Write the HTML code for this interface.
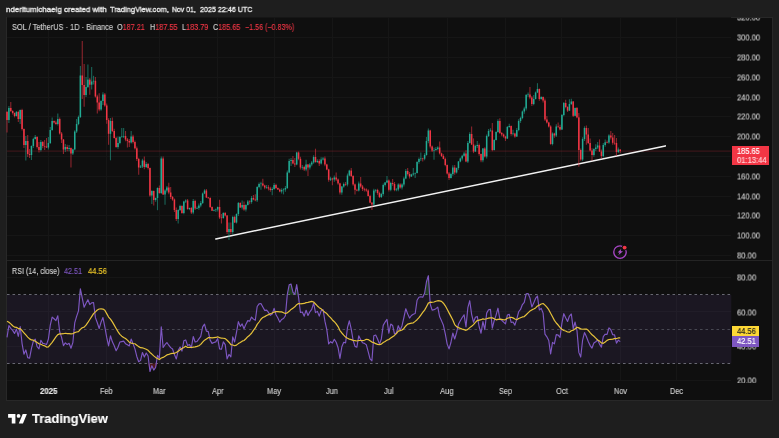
<!DOCTYPE html>
<html><head><meta charset="utf-8"><title>SOL</title><style>
html,body{margin:0;padding:0;background:#1e1e1e;}
body{width:779px;height:438px;overflow:hidden;position:relative;font-family:"Liberation Sans",sans-serif;}
.t{position:absolute;white-space:nowrap;line-height:1;will-change:transform;-webkit-text-stroke-width:0.14px;}
#pane{position:absolute;left:6px;top:17px;width:765px;height:382px;background:#0f0f0f;border:1px solid #282828;}
svg{position:absolute;left:0;top:0;}
.ax{color:#c9c9c9;font-size:7.9px;left:736.5px;}
.tm{color:#c9c9c9;font-size:7.9px;transform:translateX(-50%);top:387.5px;}
.lb{position:absolute;}
</style></head><body>
<div id="pane"></div>
<svg width="779" height="438" viewBox="0 0 779 438"><line x1="48.5" y1="18" x2="48.5" y2="380" stroke="#161616" stroke-width="1"/>
<line x1="106.5" y1="18" x2="106.5" y2="380" stroke="#161616" stroke-width="1"/>
<line x1="159.5" y1="18" x2="159.5" y2="380" stroke="#161616" stroke-width="1"/>
<line x1="217.5" y1="18" x2="217.5" y2="380" stroke="#161616" stroke-width="1"/>
<line x1="274.5" y1="18" x2="274.5" y2="380" stroke="#161616" stroke-width="1"/>
<line x1="332.5" y1="18" x2="332.5" y2="380" stroke="#161616" stroke-width="1"/>
<line x1="388.5" y1="18" x2="388.5" y2="380" stroke="#161616" stroke-width="1"/>
<line x1="447.5" y1="18" x2="447.5" y2="380" stroke="#161616" stroke-width="1"/>
<line x1="505.5" y1="18" x2="505.5" y2="380" stroke="#161616" stroke-width="1"/>
<line x1="561.5" y1="18" x2="561.5" y2="380" stroke="#161616" stroke-width="1"/>
<line x1="620.5" y1="18" x2="620.5" y2="380" stroke="#161616" stroke-width="1"/>
<line x1="676.5" y1="18" x2="676.5" y2="380" stroke="#161616" stroke-width="1"/>
<line x1="7" y1="255.5" x2="731" y2="255.5" stroke="#161616" stroke-width="1"/>
<line x1="7" y1="235.5" x2="731" y2="235.5" stroke="#161616" stroke-width="1"/>
<line x1="7" y1="215.5" x2="731" y2="215.5" stroke="#161616" stroke-width="1"/>
<line x1="7" y1="196.5" x2="731" y2="196.5" stroke="#161616" stroke-width="1"/>
<line x1="7" y1="176.5" x2="731" y2="176.5" stroke="#161616" stroke-width="1"/>
<line x1="7" y1="156.5" x2="731" y2="156.5" stroke="#161616" stroke-width="1"/>
<line x1="7" y1="136.5" x2="731" y2="136.5" stroke="#161616" stroke-width="1"/>
<line x1="7" y1="116.5" x2="731" y2="116.5" stroke="#161616" stroke-width="1"/>
<line x1="7" y1="97.5" x2="731" y2="97.5" stroke="#161616" stroke-width="1"/>
<line x1="7" y1="77.5" x2="731" y2="77.5" stroke="#161616" stroke-width="1"/>
<line x1="7" y1="57.5" x2="731" y2="57.5" stroke="#161616" stroke-width="1"/>
<line x1="7" y1="37.5" x2="731" y2="37.5" stroke="#161616" stroke-width="1"/>
<line x1="7" y1="17.5" x2="731" y2="17.5" stroke="#161616" stroke-width="1"/>
<line x1="7" y1="380.5" x2="731" y2="380.5" stroke="#161616" stroke-width="1"/>
<line x1="7" y1="346.5" x2="731" y2="346.5" stroke="#161616" stroke-width="1"/>
<line x1="7" y1="311.5" x2="731" y2="311.5" stroke="#161616" stroke-width="1"/>
<line x1="7" y1="277.5" x2="731" y2="277.5" stroke="#161616" stroke-width="1"/>
<line x1="7" y1="260.5" x2="772" y2="260.5" stroke="#242424" stroke-width="1"/>
<rect x="7" y="294.8" width="724.3" height="68.6" fill="#7e57c2" fill-opacity="0.11"/>
<line x1="7" y1="294.5" x2="731.3" y2="294.5" stroke="#686872" stroke-width="1" stroke-dasharray="2.6 2.9"/>
<line x1="7" y1="329.5" x2="731.3" y2="329.5" stroke="#484852" stroke-width="1" stroke-dasharray="2.6 2.9"/>
<line x1="7" y1="363.5" x2="731.3" y2="363.5" stroke="#686872" stroke-width="1" stroke-dasharray="2.6 2.9"/>
<line x1="7" y1="151.1" x2="731" y2="151.1" stroke="#f23645" stroke-opacity="0.24" stroke-width="1"/>
<line x1="215.8" y1="238.9" x2="665.3" y2="145.9" stroke="#f2f2f2" stroke-width="1.55" stroke-linecap="round"/>
<line x1="7.02" y1="111.00" x2="7.02" y2="132.50" stroke="#f23645" stroke-width="1.1" stroke-opacity="0.55"/>
<rect x="6.27" y="112.00" width="1.5" height="8.00" fill="#f23645"/>
<line x1="8.90" y1="106.00" x2="8.90" y2="123.00" stroke="#22ab94" stroke-width="1.1" stroke-opacity="0.55"/>
<rect x="8.15" y="108.00" width="1.5" height="12.00" fill="#22ab94"/>
<line x1="10.78" y1="102.00" x2="10.78" y2="111.98" stroke="#f23645" stroke-width="1.1" stroke-opacity="0.55"/>
<rect x="10.03" y="108.00" width="1.5" height="3.00" fill="#f23645"/>
<line x1="12.66" y1="110.33" x2="12.66" y2="114.57" stroke="#f23645" stroke-width="1.1" stroke-opacity="0.55"/>
<rect x="11.91" y="111.00" width="1.5" height="2.00" fill="#f23645"/>
<line x1="14.54" y1="112.47" x2="14.54" y2="117.36" stroke="#f23645" stroke-width="1.1" stroke-opacity="0.55"/>
<rect x="13.79" y="113.00" width="1.5" height="3.00" fill="#f23645"/>
<line x1="16.42" y1="110.94" x2="16.42" y2="116.50" stroke="#22ab94" stroke-width="1.1" stroke-opacity="0.55"/>
<rect x="15.67" y="112.00" width="1.5" height="4.00" fill="#22ab94"/>
<line x1="18.30" y1="110.69" x2="18.30" y2="122.00" stroke="#f23645" stroke-width="1.1" stroke-opacity="0.55"/>
<rect x="17.55" y="112.00" width="1.5" height="7.00" fill="#f23645"/>
<line x1="20.18" y1="109.53" x2="20.18" y2="124.00" stroke="#22ab94" stroke-width="1.1" stroke-opacity="0.55"/>
<rect x="19.43" y="110.00" width="1.5" height="9.00" fill="#22ab94"/>
<line x1="22.07" y1="108.82" x2="22.07" y2="130.60" stroke="#f23645" stroke-width="1.1" stroke-opacity="0.55"/>
<rect x="21.32" y="110.00" width="1.5" height="19.00" fill="#f23645"/>
<line x1="23.95" y1="128.47" x2="23.95" y2="148.00" stroke="#f23645" stroke-width="1.1" stroke-opacity="0.55"/>
<rect x="23.20" y="129.00" width="1.5" height="16.00" fill="#f23645"/>
<line x1="25.83" y1="136.00" x2="25.83" y2="160.50" stroke="#22ab94" stroke-width="1.1" stroke-opacity="0.55"/>
<rect x="25.08" y="141.00" width="1.5" height="4.00" fill="#22ab94"/>
<line x1="27.71" y1="135.00" x2="27.71" y2="157.00" stroke="#f23645" stroke-width="1.1" stroke-opacity="0.55"/>
<rect x="26.96" y="141.00" width="1.5" height="13.00" fill="#f23645"/>
<line x1="29.59" y1="149.00" x2="29.59" y2="158.00" stroke="#f23645" stroke-width="1.1" stroke-opacity="0.55"/>
<rect x="28.84" y="154.00" width="1.5" height="1.00" fill="#f23645"/>
<line x1="31.47" y1="145.44" x2="31.47" y2="160.00" stroke="#22ab94" stroke-width="1.1" stroke-opacity="0.55"/>
<rect x="30.72" y="146.00" width="1.5" height="9.00" fill="#22ab94"/>
<line x1="33.35" y1="137.84" x2="33.35" y2="147.89" stroke="#22ab94" stroke-width="1.1" stroke-opacity="0.55"/>
<rect x="32.60" y="139.00" width="1.5" height="7.00" fill="#22ab94"/>
<line x1="35.23" y1="135.00" x2="35.23" y2="139.62" stroke="#22ab94" stroke-width="1.1" stroke-opacity="0.55"/>
<rect x="34.48" y="137.00" width="1.5" height="2.00" fill="#22ab94"/>
<line x1="37.11" y1="136.20" x2="37.11" y2="148.53" stroke="#f23645" stroke-width="1.1" stroke-opacity="0.55"/>
<rect x="36.36" y="137.00" width="1.5" height="10.00" fill="#f23645"/>
<line x1="38.99" y1="142.00" x2="38.99" y2="152.60" stroke="#f23645" stroke-width="1.1" stroke-opacity="0.55"/>
<rect x="38.24" y="147.00" width="1.5" height="3.00" fill="#f23645"/>
<line x1="40.88" y1="139.89" x2="40.88" y2="151.44" stroke="#22ab94" stroke-width="1.1" stroke-opacity="0.55"/>
<rect x="40.13" y="142.00" width="1.5" height="8.00" fill="#22ab94"/>
<line x1="42.76" y1="140.89" x2="42.76" y2="148.16" stroke="#f23645" stroke-width="1.1" stroke-opacity="0.55"/>
<rect x="42.01" y="142.00" width="1.5" height="4.00" fill="#f23645"/>
<line x1="44.64" y1="140.00" x2="44.64" y2="150.00" stroke="#f23645" stroke-width="1.1" stroke-opacity="0.55"/>
<rect x="43.89" y="146.00" width="1.5" height="0.60" fill="#f23645"/>
<line x1="46.52" y1="138.00" x2="46.52" y2="147.98" stroke="#f23645" stroke-width="1.1" stroke-opacity="0.55"/>
<rect x="45.77" y="146.50" width="1.5" height="1.00" fill="#f23645"/>
<line x1="48.40" y1="137.00" x2="48.40" y2="149.45" stroke="#22ab94" stroke-width="1.1" stroke-opacity="0.55"/>
<rect x="47.65" y="143.00" width="1.5" height="4.50" fill="#22ab94"/>
<line x1="50.28" y1="127.00" x2="50.28" y2="143.92" stroke="#22ab94" stroke-width="1.1" stroke-opacity="0.55"/>
<rect x="49.53" y="130.00" width="1.5" height="13.00" fill="#22ab94"/>
<line x1="52.16" y1="117.50" x2="52.16" y2="130.66" stroke="#22ab94" stroke-width="1.1" stroke-opacity="0.55"/>
<rect x="51.41" y="121.00" width="1.5" height="9.00" fill="#22ab94"/>
<line x1="54.04" y1="120.39" x2="54.04" y2="123.46" stroke="#f23645" stroke-width="1.1" stroke-opacity="0.55"/>
<rect x="53.29" y="121.00" width="1.5" height="1.50" fill="#f23645"/>
<line x1="55.92" y1="120.63" x2="55.92" y2="124.73" stroke="#f23645" stroke-width="1.1" stroke-opacity="0.55"/>
<rect x="55.17" y="122.50" width="1.5" height="1.50" fill="#f23645"/>
<line x1="57.80" y1="113.50" x2="57.80" y2="125.45" stroke="#22ab94" stroke-width="1.1" stroke-opacity="0.55"/>
<rect x="57.05" y="119.00" width="1.5" height="5.00" fill="#22ab94"/>
<line x1="59.69" y1="117.45" x2="59.69" y2="134.57" stroke="#f23645" stroke-width="1.1" stroke-opacity="0.55"/>
<rect x="58.94" y="119.00" width="1.5" height="14.50" fill="#f23645"/>
<line x1="61.57" y1="132.11" x2="61.57" y2="143.00" stroke="#f23645" stroke-width="1.1" stroke-opacity="0.55"/>
<rect x="60.82" y="133.50" width="1.5" height="6.00" fill="#f23645"/>
<line x1="63.45" y1="138.99" x2="63.45" y2="154.00" stroke="#f23645" stroke-width="1.1" stroke-opacity="0.55"/>
<rect x="62.70" y="139.50" width="1.5" height="10.00" fill="#f23645"/>
<line x1="65.33" y1="144.00" x2="65.33" y2="152.00" stroke="#22ab94" stroke-width="1.1" stroke-opacity="0.55"/>
<rect x="64.58" y="147.00" width="1.5" height="2.50" fill="#22ab94"/>
<line x1="67.21" y1="144.80" x2="67.21" y2="151.20" stroke="#f23645" stroke-width="1.1" stroke-opacity="0.55"/>
<rect x="66.46" y="147.00" width="1.5" height="2.00" fill="#f23645"/>
<line x1="69.09" y1="145.00" x2="69.09" y2="151.20" stroke="#22ab94" stroke-width="1.1" stroke-opacity="0.55"/>
<rect x="68.34" y="148.00" width="1.5" height="1.00" fill="#22ab94"/>
<line x1="70.97" y1="147.49" x2="70.97" y2="167.60" stroke="#f23645" stroke-width="1.1" stroke-opacity="0.55"/>
<rect x="70.22" y="148.00" width="1.5" height="5.50" fill="#f23645"/>
<line x1="72.85" y1="148.63" x2="72.85" y2="155.12" stroke="#22ab94" stroke-width="1.1" stroke-opacity="0.55"/>
<rect x="72.10" y="149.40" width="1.5" height="4.10" fill="#22ab94"/>
<line x1="74.73" y1="130.33" x2="74.73" y2="150.37" stroke="#22ab94" stroke-width="1.1" stroke-opacity="0.55"/>
<rect x="73.98" y="131.50" width="1.5" height="17.90" fill="#22ab94"/>
<line x1="76.61" y1="119.00" x2="76.61" y2="132.95" stroke="#22ab94" stroke-width="1.1" stroke-opacity="0.55"/>
<rect x="75.86" y="124.00" width="1.5" height="7.50" fill="#22ab94"/>
<line x1="78.50" y1="115.50" x2="78.50" y2="125.22" stroke="#22ab94" stroke-width="1.1" stroke-opacity="0.55"/>
<rect x="77.75" y="117.00" width="1.5" height="7.00" fill="#22ab94"/>
<line x1="80.38" y1="66.00" x2="80.38" y2="118.00" stroke="#22ab94" stroke-width="1.1" stroke-opacity="0.55"/>
<rect x="79.63" y="75.50" width="1.5" height="41.50" fill="#22ab94"/>
<line x1="82.26" y1="41.00" x2="82.26" y2="99.00" stroke="#f23645" stroke-width="1.1" stroke-opacity="0.55"/>
<rect x="81.51" y="75.50" width="1.5" height="9.50" fill="#f23645"/>
<line x1="84.14" y1="64.00" x2="84.14" y2="106.80" stroke="#f23645" stroke-width="1.1" stroke-opacity="0.55"/>
<rect x="83.39" y="85.00" width="1.5" height="10.00" fill="#f23645"/>
<line x1="86.02" y1="77.00" x2="86.02" y2="97.00" stroke="#22ab94" stroke-width="1.1" stroke-opacity="0.55"/>
<rect x="85.27" y="87.00" width="1.5" height="8.00" fill="#22ab94"/>
<line x1="87.90" y1="64.60" x2="87.90" y2="88.00" stroke="#22ab94" stroke-width="1.1" stroke-opacity="0.55"/>
<rect x="87.15" y="79.60" width="1.5" height="7.40" fill="#22ab94"/>
<line x1="89.78" y1="78.00" x2="89.78" y2="94.70" stroke="#f23645" stroke-width="1.1" stroke-opacity="0.55"/>
<rect x="89.03" y="79.60" width="1.5" height="5.10" fill="#f23645"/>
<line x1="91.66" y1="67.00" x2="91.66" y2="89.40" stroke="#22ab94" stroke-width="1.1" stroke-opacity="0.55"/>
<rect x="90.91" y="81.50" width="1.5" height="3.20" fill="#22ab94"/>
<line x1="93.54" y1="75.80" x2="93.54" y2="84.50" stroke="#22ab94" stroke-width="1.1" stroke-opacity="0.55"/>
<rect x="92.79" y="80.80" width="1.5" height="0.70" fill="#22ab94"/>
<line x1="95.42" y1="77.00" x2="95.42" y2="97.44" stroke="#f23645" stroke-width="1.1" stroke-opacity="0.55"/>
<rect x="94.67" y="80.80" width="1.5" height="15.70" fill="#f23645"/>
<line x1="97.31" y1="94.67" x2="97.31" y2="113.60" stroke="#f23645" stroke-width="1.1" stroke-opacity="0.55"/>
<rect x="96.56" y="96.50" width="1.5" height="6.00" fill="#f23645"/>
<line x1="99.19" y1="93.30" x2="99.19" y2="111.16" stroke="#f23645" stroke-width="1.1" stroke-opacity="0.55"/>
<rect x="98.44" y="102.50" width="1.5" height="7.00" fill="#f23645"/>
<line x1="101.07" y1="100.16" x2="101.07" y2="110.70" stroke="#22ab94" stroke-width="1.1" stroke-opacity="0.55"/>
<rect x="100.32" y="101.00" width="1.5" height="8.50" fill="#22ab94"/>
<line x1="102.95" y1="92.30" x2="102.95" y2="105.00" stroke="#22ab94" stroke-width="1.1" stroke-opacity="0.55"/>
<rect x="102.20" y="94.50" width="1.5" height="6.50" fill="#22ab94"/>
<line x1="104.83" y1="93.07" x2="104.83" y2="106.85" stroke="#f23645" stroke-width="1.1" stroke-opacity="0.55"/>
<rect x="104.08" y="94.50" width="1.5" height="11.00" fill="#f23645"/>
<line x1="106.71" y1="103.52" x2="106.71" y2="123.80" stroke="#f23645" stroke-width="1.1" stroke-opacity="0.55"/>
<rect x="105.96" y="105.50" width="1.5" height="14.50" fill="#f23645"/>
<line x1="108.59" y1="118.29" x2="108.59" y2="144.80" stroke="#f23645" stroke-width="1.1" stroke-opacity="0.55"/>
<rect x="107.84" y="120.00" width="1.5" height="13.80" fill="#f23645"/>
<line x1="110.47" y1="118.00" x2="110.47" y2="160.30" stroke="#22ab94" stroke-width="1.1" stroke-opacity="0.55"/>
<rect x="109.72" y="121.00" width="1.5" height="12.80" fill="#22ab94"/>
<line x1="112.35" y1="117.40" x2="112.35" y2="131.92" stroke="#f23645" stroke-width="1.1" stroke-opacity="0.55"/>
<rect x="111.60" y="121.00" width="1.5" height="10.00" fill="#f23645"/>
<line x1="114.23" y1="128.84" x2="114.23" y2="138.61" stroke="#f23645" stroke-width="1.1" stroke-opacity="0.55"/>
<rect x="113.48" y="131.00" width="1.5" height="7.00" fill="#f23645"/>
<line x1="116.12" y1="136.85" x2="116.12" y2="147.80" stroke="#f23645" stroke-width="1.1" stroke-opacity="0.55"/>
<rect x="115.37" y="138.00" width="1.5" height="9.00" fill="#f23645"/>
<line x1="118.00" y1="136.60" x2="118.00" y2="148.76" stroke="#22ab94" stroke-width="1.1" stroke-opacity="0.55"/>
<rect x="117.25" y="143.00" width="1.5" height="4.00" fill="#22ab94"/>
<line x1="119.88" y1="136.33" x2="119.88" y2="144.28" stroke="#22ab94" stroke-width="1.1" stroke-opacity="0.55"/>
<rect x="119.13" y="137.00" width="1.5" height="6.00" fill="#22ab94"/>
<line x1="121.76" y1="128.00" x2="121.76" y2="137.47" stroke="#22ab94" stroke-width="1.1" stroke-opacity="0.55"/>
<rect x="121.01" y="136.50" width="1.5" height="0.60" fill="#22ab94"/>
<line x1="123.64" y1="128.00" x2="123.64" y2="138.10" stroke="#22ab94" stroke-width="1.1" stroke-opacity="0.55"/>
<rect x="122.89" y="136.00" width="1.5" height="0.60" fill="#22ab94"/>
<line x1="125.52" y1="131.00" x2="125.52" y2="141.28" stroke="#f23645" stroke-width="1.1" stroke-opacity="0.55"/>
<rect x="124.77" y="136.00" width="1.5" height="3.50" fill="#f23645"/>
<line x1="127.40" y1="138.07" x2="127.40" y2="147.40" stroke="#f23645" stroke-width="1.1" stroke-opacity="0.55"/>
<rect x="126.65" y="139.50" width="1.5" height="1.50" fill="#f23645"/>
<line x1="129.28" y1="139.02" x2="129.28" y2="147.00" stroke="#f23645" stroke-width="1.1" stroke-opacity="0.55"/>
<rect x="128.53" y="141.00" width="1.5" height="1.50" fill="#f23645"/>
<line x1="131.16" y1="131.00" x2="131.16" y2="143.46" stroke="#22ab94" stroke-width="1.1" stroke-opacity="0.55"/>
<rect x="130.41" y="136.50" width="1.5" height="6.00" fill="#22ab94"/>
<line x1="133.04" y1="134.85" x2="133.04" y2="143.47" stroke="#f23645" stroke-width="1.1" stroke-opacity="0.55"/>
<rect x="132.29" y="136.50" width="1.5" height="5.50" fill="#f23645"/>
<line x1="134.93" y1="140.56" x2="134.93" y2="149.52" stroke="#f23645" stroke-width="1.1" stroke-opacity="0.55"/>
<rect x="134.18" y="142.00" width="1.5" height="6.30" fill="#f23645"/>
<line x1="136.81" y1="146.39" x2="136.81" y2="161.10" stroke="#f23645" stroke-width="1.1" stroke-opacity="0.55"/>
<rect x="136.06" y="148.30" width="1.5" height="10.70" fill="#f23645"/>
<line x1="138.69" y1="157.75" x2="138.69" y2="174.80" stroke="#f23645" stroke-width="1.1" stroke-opacity="0.55"/>
<rect x="137.94" y="159.00" width="1.5" height="8.50" fill="#f23645"/>
<line x1="140.57" y1="164.90" x2="140.57" y2="168.01" stroke="#22ab94" stroke-width="1.1" stroke-opacity="0.55"/>
<rect x="139.82" y="166.50" width="1.5" height="1.00" fill="#22ab94"/>
<line x1="142.45" y1="158.84" x2="142.45" y2="168.06" stroke="#22ab94" stroke-width="1.1" stroke-opacity="0.55"/>
<rect x="141.70" y="160.50" width="1.5" height="6.00" fill="#22ab94"/>
<line x1="144.33" y1="156.60" x2="144.33" y2="169.19" stroke="#f23645" stroke-width="1.1" stroke-opacity="0.55"/>
<rect x="143.58" y="160.50" width="1.5" height="6.50" fill="#f23645"/>
<line x1="146.21" y1="162.12" x2="146.21" y2="167.91" stroke="#22ab94" stroke-width="1.1" stroke-opacity="0.55"/>
<rect x="145.46" y="164.00" width="1.5" height="3.00" fill="#22ab94"/>
<line x1="148.09" y1="162.91" x2="148.09" y2="169.60" stroke="#f23645" stroke-width="1.1" stroke-opacity="0.55"/>
<rect x="147.34" y="164.00" width="1.5" height="4.00" fill="#f23645"/>
<line x1="149.97" y1="167.56" x2="149.97" y2="196.73" stroke="#f23645" stroke-width="1.1" stroke-opacity="0.55"/>
<rect x="149.22" y="168.00" width="1.5" height="27.50" fill="#f23645"/>
<line x1="151.85" y1="190.30" x2="151.85" y2="204.00" stroke="#22ab94" stroke-width="1.1" stroke-opacity="0.55"/>
<rect x="151.10" y="191.00" width="1.5" height="4.50" fill="#22ab94"/>
<line x1="153.74" y1="190.39" x2="153.74" y2="205.60" stroke="#f23645" stroke-width="1.1" stroke-opacity="0.55"/>
<rect x="152.99" y="191.00" width="1.5" height="9.00" fill="#f23645"/>
<line x1="155.62" y1="197.49" x2="155.62" y2="201.78" stroke="#22ab94" stroke-width="1.1" stroke-opacity="0.55"/>
<rect x="154.87" y="198.00" width="1.5" height="2.00" fill="#22ab94"/>
<line x1="157.50" y1="187.37" x2="157.50" y2="210.20" stroke="#22ab94" stroke-width="1.1" stroke-opacity="0.55"/>
<rect x="156.75" y="188.00" width="1.5" height="10.00" fill="#22ab94"/>
<line x1="159.38" y1="185.50" x2="159.38" y2="193.85" stroke="#f23645" stroke-width="1.1" stroke-opacity="0.55"/>
<rect x="158.63" y="188.00" width="1.5" height="5.00" fill="#f23645"/>
<line x1="161.26" y1="156.60" x2="161.26" y2="194.10" stroke="#22ab94" stroke-width="1.1" stroke-opacity="0.55"/>
<rect x="160.51" y="158.50" width="1.5" height="34.50" fill="#22ab94"/>
<line x1="163.14" y1="156.53" x2="163.14" y2="195.05" stroke="#f23645" stroke-width="1.1" stroke-opacity="0.55"/>
<rect x="162.39" y="158.50" width="1.5" height="36.00" fill="#f23645"/>
<line x1="165.02" y1="189.29" x2="165.02" y2="204.70" stroke="#22ab94" stroke-width="1.1" stroke-opacity="0.55"/>
<rect x="164.27" y="190.50" width="1.5" height="4.00" fill="#22ab94"/>
<line x1="166.90" y1="186.11" x2="166.90" y2="192.49" stroke="#22ab94" stroke-width="1.1" stroke-opacity="0.55"/>
<rect x="166.15" y="187.50" width="1.5" height="3.00" fill="#22ab94"/>
<line x1="168.78" y1="182.80" x2="168.78" y2="194.37" stroke="#f23645" stroke-width="1.1" stroke-opacity="0.55"/>
<rect x="168.03" y="187.50" width="1.5" height="5.00" fill="#f23645"/>
<line x1="170.66" y1="187.00" x2="170.66" y2="198.96" stroke="#f23645" stroke-width="1.1" stroke-opacity="0.55"/>
<rect x="169.91" y="192.50" width="1.5" height="4.50" fill="#f23645"/>
<line x1="172.55" y1="196.10" x2="172.55" y2="200.65" stroke="#f23645" stroke-width="1.1" stroke-opacity="0.55"/>
<rect x="171.80" y="197.00" width="1.5" height="2.50" fill="#f23645"/>
<line x1="174.43" y1="198.45" x2="174.43" y2="211.99" stroke="#f23645" stroke-width="1.1" stroke-opacity="0.55"/>
<rect x="173.68" y="199.50" width="1.5" height="10.50" fill="#f23645"/>
<line x1="176.31" y1="207.50" x2="176.31" y2="221.12" stroke="#f23645" stroke-width="1.1" stroke-opacity="0.55"/>
<rect x="175.56" y="210.00" width="1.5" height="9.00" fill="#f23645"/>
<line x1="178.19" y1="209.33" x2="178.19" y2="223.40" stroke="#22ab94" stroke-width="1.1" stroke-opacity="0.55"/>
<rect x="177.44" y="210.00" width="1.5" height="9.00" fill="#22ab94"/>
<line x1="180.07" y1="204.70" x2="180.07" y2="211.00" stroke="#22ab94" stroke-width="1.1" stroke-opacity="0.55"/>
<rect x="179.32" y="206.00" width="1.5" height="4.00" fill="#22ab94"/>
<line x1="181.95" y1="205.28" x2="181.95" y2="213.82" stroke="#f23645" stroke-width="1.1" stroke-opacity="0.55"/>
<rect x="181.20" y="206.00" width="1.5" height="7.00" fill="#f23645"/>
<line x1="183.83" y1="200.68" x2="183.83" y2="214.27" stroke="#22ab94" stroke-width="1.1" stroke-opacity="0.55"/>
<rect x="183.08" y="201.50" width="1.5" height="11.50" fill="#22ab94"/>
<line x1="185.71" y1="199.30" x2="185.71" y2="203.00" stroke="#22ab94" stroke-width="1.1" stroke-opacity="0.55"/>
<rect x="184.96" y="200.50" width="1.5" height="1.00" fill="#22ab94"/>
<line x1="187.59" y1="199.04" x2="187.59" y2="209.87" stroke="#f23645" stroke-width="1.1" stroke-opacity="0.55"/>
<rect x="186.84" y="200.50" width="1.5" height="8.50" fill="#f23645"/>
<line x1="189.47" y1="207.59" x2="189.47" y2="210.15" stroke="#22ab94" stroke-width="1.1" stroke-opacity="0.55"/>
<rect x="188.72" y="208.00" width="1.5" height="1.00" fill="#22ab94"/>
<line x1="191.36" y1="206.94" x2="191.36" y2="213.92" stroke="#f23645" stroke-width="1.1" stroke-opacity="0.55"/>
<rect x="190.61" y="208.00" width="1.5" height="4.50" fill="#f23645"/>
<line x1="193.24" y1="198.88" x2="193.24" y2="214.14" stroke="#22ab94" stroke-width="1.1" stroke-opacity="0.55"/>
<rect x="192.49" y="201.00" width="1.5" height="11.50" fill="#22ab94"/>
<line x1="195.12" y1="199.67" x2="195.12" y2="210.01" stroke="#f23645" stroke-width="1.1" stroke-opacity="0.55"/>
<rect x="194.37" y="201.00" width="1.5" height="7.50" fill="#f23645"/>
<line x1="197.00" y1="206.38" x2="197.00" y2="209.00" stroke="#22ab94" stroke-width="1.1" stroke-opacity="0.55"/>
<rect x="196.25" y="208.00" width="1.5" height="0.60" fill="#22ab94"/>
<line x1="198.88" y1="203.48" x2="198.88" y2="209.80" stroke="#22ab94" stroke-width="1.1" stroke-opacity="0.55"/>
<rect x="198.13" y="205.50" width="1.5" height="2.50" fill="#22ab94"/>
<line x1="200.76" y1="201.03" x2="200.76" y2="207.34" stroke="#22ab94" stroke-width="1.1" stroke-opacity="0.55"/>
<rect x="200.01" y="203.00" width="1.5" height="2.50" fill="#22ab94"/>
<line x1="202.64" y1="192.39" x2="202.64" y2="204.12" stroke="#22ab94" stroke-width="1.1" stroke-opacity="0.55"/>
<rect x="201.89" y="193.50" width="1.5" height="9.50" fill="#22ab94"/>
<line x1="204.52" y1="189.20" x2="204.52" y2="194.09" stroke="#22ab94" stroke-width="1.1" stroke-opacity="0.55"/>
<rect x="203.77" y="190.50" width="1.5" height="3.00" fill="#22ab94"/>
<line x1="206.40" y1="188.96" x2="206.40" y2="198.01" stroke="#f23645" stroke-width="1.1" stroke-opacity="0.55"/>
<rect x="205.65" y="190.50" width="1.5" height="7.00" fill="#f23645"/>
<line x1="208.28" y1="196.98" x2="208.28" y2="198.78" stroke="#f23645" stroke-width="1.1" stroke-opacity="0.55"/>
<rect x="207.53" y="197.50" width="1.5" height="0.60" fill="#f23645"/>
<line x1="210.17" y1="197.31" x2="210.17" y2="208.01" stroke="#f23645" stroke-width="1.1" stroke-opacity="0.55"/>
<rect x="209.42" y="198.00" width="1.5" height="9.00" fill="#f23645"/>
<line x1="212.05" y1="206.51" x2="212.05" y2="211.10" stroke="#f23645" stroke-width="1.1" stroke-opacity="0.55"/>
<rect x="211.30" y="207.00" width="1.5" height="3.70" fill="#f23645"/>
<line x1="213.93" y1="209.33" x2="213.93" y2="211.28" stroke="#22ab94" stroke-width="1.1" stroke-opacity="0.55"/>
<rect x="213.18" y="210.00" width="1.5" height="0.70" fill="#22ab94"/>
<line x1="215.81" y1="208.45" x2="215.81" y2="212.00" stroke="#22ab94" stroke-width="1.1" stroke-opacity="0.55"/>
<rect x="215.06" y="209.50" width="1.5" height="0.60" fill="#22ab94"/>
<line x1="217.69" y1="206.55" x2="217.69" y2="211.47" stroke="#22ab94" stroke-width="1.1" stroke-opacity="0.55"/>
<rect x="216.94" y="207.00" width="1.5" height="2.50" fill="#22ab94"/>
<line x1="219.57" y1="199.70" x2="219.57" y2="219.01" stroke="#f23645" stroke-width="1.1" stroke-opacity="0.55"/>
<rect x="218.82" y="207.00" width="1.5" height="10.50" fill="#f23645"/>
<line x1="221.45" y1="214.00" x2="221.45" y2="223.50" stroke="#f23645" stroke-width="1.1" stroke-opacity="0.55"/>
<rect x="220.70" y="217.50" width="1.5" height="0.60" fill="#f23645"/>
<line x1="223.33" y1="212.33" x2="223.33" y2="218.85" stroke="#22ab94" stroke-width="1.1" stroke-opacity="0.55"/>
<rect x="222.58" y="213.00" width="1.5" height="5.00" fill="#22ab94"/>
<line x1="225.21" y1="211.97" x2="225.21" y2="216.56" stroke="#f23645" stroke-width="1.1" stroke-opacity="0.55"/>
<rect x="224.46" y="213.00" width="1.5" height="2.50" fill="#f23645"/>
<line x1="227.09" y1="214.88" x2="227.09" y2="233.93" stroke="#f23645" stroke-width="1.1" stroke-opacity="0.55"/>
<rect x="226.34" y="215.50" width="1.5" height="16.50" fill="#f23645"/>
<line x1="228.98" y1="222.50" x2="228.98" y2="240.00" stroke="#22ab94" stroke-width="1.1" stroke-opacity="0.55"/>
<rect x="228.23" y="229.00" width="1.5" height="3.00" fill="#22ab94"/>
<line x1="230.86" y1="222.60" x2="230.86" y2="234.19" stroke="#f23645" stroke-width="1.1" stroke-opacity="0.55"/>
<rect x="230.11" y="229.00" width="1.5" height="3.00" fill="#f23645"/>
<line x1="232.74" y1="215.76" x2="232.74" y2="234.50" stroke="#22ab94" stroke-width="1.1" stroke-opacity="0.55"/>
<rect x="231.99" y="217.00" width="1.5" height="15.00" fill="#22ab94"/>
<line x1="234.62" y1="215.73" x2="234.62" y2="223.05" stroke="#f23645" stroke-width="1.1" stroke-opacity="0.55"/>
<rect x="233.87" y="217.00" width="1.5" height="5.50" fill="#f23645"/>
<line x1="236.50" y1="213.42" x2="236.50" y2="223.52" stroke="#22ab94" stroke-width="1.1" stroke-opacity="0.55"/>
<rect x="235.75" y="214.00" width="1.5" height="8.50" fill="#22ab94"/>
<line x1="238.38" y1="202.12" x2="238.38" y2="215.89" stroke="#22ab94" stroke-width="1.1" stroke-opacity="0.55"/>
<rect x="237.63" y="203.00" width="1.5" height="11.00" fill="#22ab94"/>
<line x1="240.26" y1="202.31" x2="240.26" y2="207.94" stroke="#f23645" stroke-width="1.1" stroke-opacity="0.55"/>
<rect x="239.51" y="203.00" width="1.5" height="4.50" fill="#f23645"/>
<line x1="242.14" y1="200.60" x2="242.14" y2="209.61" stroke="#22ab94" stroke-width="1.1" stroke-opacity="0.55"/>
<rect x="241.39" y="205.00" width="1.5" height="2.50" fill="#22ab94"/>
<line x1="244.02" y1="201.60" x2="244.02" y2="210.85" stroke="#f23645" stroke-width="1.1" stroke-opacity="0.55"/>
<rect x="243.27" y="205.00" width="1.5" height="4.50" fill="#f23645"/>
<line x1="245.91" y1="204.34" x2="245.91" y2="211.60" stroke="#22ab94" stroke-width="1.1" stroke-opacity="0.55"/>
<rect x="245.16" y="205.00" width="1.5" height="4.50" fill="#22ab94"/>
<line x1="247.79" y1="200.12" x2="247.79" y2="205.45" stroke="#22ab94" stroke-width="1.1" stroke-opacity="0.55"/>
<rect x="247.04" y="201.50" width="1.5" height="3.50" fill="#22ab94"/>
<line x1="249.67" y1="200.15" x2="249.67" y2="204.16" stroke="#f23645" stroke-width="1.1" stroke-opacity="0.55"/>
<rect x="248.92" y="201.50" width="1.5" height="0.60" fill="#f23645"/>
<line x1="251.55" y1="196.05" x2="251.55" y2="203.65" stroke="#22ab94" stroke-width="1.1" stroke-opacity="0.55"/>
<rect x="250.80" y="198.00" width="1.5" height="4.00" fill="#22ab94"/>
<line x1="253.43" y1="195.00" x2="253.43" y2="200.37" stroke="#f23645" stroke-width="1.1" stroke-opacity="0.55"/>
<rect x="252.68" y="198.00" width="1.5" height="1.50" fill="#f23645"/>
<line x1="255.31" y1="194.30" x2="255.31" y2="201.36" stroke="#f23645" stroke-width="1.1" stroke-opacity="0.55"/>
<rect x="254.56" y="199.50" width="1.5" height="0.80" fill="#f23645"/>
<line x1="257.19" y1="186.30" x2="257.19" y2="202.09" stroke="#22ab94" stroke-width="1.1" stroke-opacity="0.55"/>
<rect x="256.44" y="187.00" width="1.5" height="13.30" fill="#22ab94"/>
<line x1="259.07" y1="182.40" x2="259.07" y2="188.36" stroke="#22ab94" stroke-width="1.1" stroke-opacity="0.55"/>
<rect x="258.32" y="184.00" width="1.5" height="3.00" fill="#22ab94"/>
<line x1="260.95" y1="181.70" x2="260.95" y2="189.70" stroke="#22ab94" stroke-width="1.1" stroke-opacity="0.55"/>
<rect x="260.20" y="183.50" width="1.5" height="0.60" fill="#22ab94"/>
<line x1="262.83" y1="178.70" x2="262.83" y2="186.49" stroke="#f23645" stroke-width="1.1" stroke-opacity="0.55"/>
<rect x="262.08" y="183.50" width="1.5" height="2.00" fill="#f23645"/>
<line x1="264.71" y1="184.70" x2="264.71" y2="189.36" stroke="#f23645" stroke-width="1.1" stroke-opacity="0.55"/>
<rect x="263.96" y="185.50" width="1.5" height="2.00" fill="#f23645"/>
<line x1="266.60" y1="185.00" x2="266.60" y2="188.80" stroke="#22ab94" stroke-width="1.1" stroke-opacity="0.55"/>
<rect x="265.85" y="187.30" width="1.5" height="0.60" fill="#22ab94"/>
<line x1="268.48" y1="185.13" x2="268.48" y2="190.43" stroke="#f23645" stroke-width="1.1" stroke-opacity="0.55"/>
<rect x="267.73" y="187.30" width="1.5" height="1.20" fill="#f23645"/>
<line x1="270.36" y1="186.65" x2="270.36" y2="191.87" stroke="#f23645" stroke-width="1.1" stroke-opacity="0.55"/>
<rect x="269.61" y="188.50" width="1.5" height="1.50" fill="#f23645"/>
<line x1="272.24" y1="187.27" x2="272.24" y2="195.30" stroke="#22ab94" stroke-width="1.1" stroke-opacity="0.55"/>
<rect x="271.49" y="189.00" width="1.5" height="1.00" fill="#22ab94"/>
<line x1="274.12" y1="183.00" x2="274.12" y2="189.81" stroke="#22ab94" stroke-width="1.1" stroke-opacity="0.55"/>
<rect x="273.37" y="185.00" width="1.5" height="4.00" fill="#22ab94"/>
<line x1="276.00" y1="183.67" x2="276.00" y2="189.04" stroke="#f23645" stroke-width="1.1" stroke-opacity="0.55"/>
<rect x="275.25" y="185.00" width="1.5" height="3.00" fill="#f23645"/>
<line x1="277.88" y1="187.55" x2="277.88" y2="189.95" stroke="#f23645" stroke-width="1.1" stroke-opacity="0.55"/>
<rect x="277.13" y="188.00" width="1.5" height="1.50" fill="#f23645"/>
<line x1="279.76" y1="188.60" x2="279.76" y2="192.37" stroke="#f23645" stroke-width="1.1" stroke-opacity="0.55"/>
<rect x="279.01" y="189.50" width="1.5" height="2.00" fill="#f23645"/>
<line x1="281.64" y1="188.35" x2="281.64" y2="193.62" stroke="#22ab94" stroke-width="1.1" stroke-opacity="0.55"/>
<rect x="280.89" y="190.00" width="1.5" height="1.50" fill="#22ab94"/>
<line x1="283.52" y1="188.29" x2="283.52" y2="194.40" stroke="#22ab94" stroke-width="1.1" stroke-opacity="0.55"/>
<rect x="282.77" y="189.50" width="1.5" height="0.60" fill="#22ab94"/>
<line x1="285.41" y1="185.91" x2="285.41" y2="191.68" stroke="#22ab94" stroke-width="1.1" stroke-opacity="0.55"/>
<rect x="284.66" y="188.00" width="1.5" height="1.50" fill="#22ab94"/>
<line x1="287.29" y1="170.38" x2="287.29" y2="189.06" stroke="#22ab94" stroke-width="1.1" stroke-opacity="0.55"/>
<rect x="286.54" y="172.50" width="1.5" height="15.50" fill="#22ab94"/>
<line x1="289.17" y1="158.80" x2="289.17" y2="173.30" stroke="#22ab94" stroke-width="1.1" stroke-opacity="0.55"/>
<rect x="288.42" y="161.00" width="1.5" height="11.50" fill="#22ab94"/>
<line x1="291.05" y1="157.90" x2="291.05" y2="166.00" stroke="#22ab94" stroke-width="1.1" stroke-opacity="0.55"/>
<rect x="290.30" y="160.00" width="1.5" height="1.00" fill="#22ab94"/>
<line x1="292.93" y1="156.00" x2="292.93" y2="164.31" stroke="#f23645" stroke-width="1.1" stroke-opacity="0.55"/>
<rect x="292.18" y="160.00" width="1.5" height="3.50" fill="#f23645"/>
<line x1="294.81" y1="158.00" x2="294.81" y2="167.00" stroke="#f23645" stroke-width="1.1" stroke-opacity="0.55"/>
<rect x="294.06" y="163.50" width="1.5" height="1.00" fill="#f23645"/>
<line x1="296.69" y1="151.75" x2="296.69" y2="165.27" stroke="#22ab94" stroke-width="1.1" stroke-opacity="0.55"/>
<rect x="295.94" y="152.50" width="1.5" height="12.00" fill="#22ab94"/>
<line x1="298.57" y1="151.50" x2="298.57" y2="160.32" stroke="#f23645" stroke-width="1.1" stroke-opacity="0.55"/>
<rect x="297.82" y="152.50" width="1.5" height="6.30" fill="#f23645"/>
<line x1="300.45" y1="156.78" x2="300.45" y2="169.41" stroke="#f23645" stroke-width="1.1" stroke-opacity="0.55"/>
<rect x="299.70" y="158.80" width="1.5" height="8.70" fill="#f23645"/>
<line x1="302.33" y1="165.00" x2="302.33" y2="169.70" stroke="#22ab94" stroke-width="1.1" stroke-opacity="0.55"/>
<rect x="301.58" y="167.00" width="1.5" height="0.60" fill="#22ab94"/>
<line x1="304.22" y1="165.74" x2="304.22" y2="171.08" stroke="#f23645" stroke-width="1.1" stroke-opacity="0.55"/>
<rect x="303.47" y="167.00" width="1.5" height="2.50" fill="#f23645"/>
<line x1="306.10" y1="159.70" x2="306.10" y2="171.34" stroke="#22ab94" stroke-width="1.1" stroke-opacity="0.55"/>
<rect x="305.35" y="164.50" width="1.5" height="5.00" fill="#22ab94"/>
<line x1="307.98" y1="163.95" x2="307.98" y2="176.00" stroke="#f23645" stroke-width="1.1" stroke-opacity="0.55"/>
<rect x="307.23" y="164.50" width="1.5" height="3.00" fill="#f23645"/>
<line x1="309.86" y1="162.91" x2="309.86" y2="169.54" stroke="#22ab94" stroke-width="1.1" stroke-opacity="0.55"/>
<rect x="309.11" y="164.50" width="1.5" height="3.00" fill="#22ab94"/>
<line x1="311.74" y1="161.00" x2="311.74" y2="166.31" stroke="#22ab94" stroke-width="1.1" stroke-opacity="0.55"/>
<rect x="310.99" y="162.50" width="1.5" height="2.00" fill="#22ab94"/>
<line x1="313.62" y1="155.25" x2="313.62" y2="163.76" stroke="#22ab94" stroke-width="1.1" stroke-opacity="0.55"/>
<rect x="312.87" y="157.00" width="1.5" height="5.50" fill="#22ab94"/>
<line x1="315.50" y1="148.70" x2="315.50" y2="162.72" stroke="#f23645" stroke-width="1.1" stroke-opacity="0.55"/>
<rect x="314.75" y="157.00" width="1.5" height="5.00" fill="#f23645"/>
<line x1="317.38" y1="159.18" x2="317.38" y2="163.00" stroke="#22ab94" stroke-width="1.1" stroke-opacity="0.55"/>
<rect x="316.63" y="161.00" width="1.5" height="1.00" fill="#22ab94"/>
<line x1="319.26" y1="159.16" x2="319.26" y2="166.00" stroke="#f23645" stroke-width="1.1" stroke-opacity="0.55"/>
<rect x="318.51" y="161.00" width="1.5" height="2.50" fill="#f23645"/>
<line x1="321.14" y1="157.35" x2="321.14" y2="164.61" stroke="#22ab94" stroke-width="1.1" stroke-opacity="0.55"/>
<rect x="320.39" y="159.50" width="1.5" height="4.00" fill="#22ab94"/>
<line x1="323.03" y1="157.00" x2="323.03" y2="160.62" stroke="#22ab94" stroke-width="1.1" stroke-opacity="0.55"/>
<rect x="322.28" y="158.50" width="1.5" height="1.00" fill="#22ab94"/>
<line x1="324.91" y1="156.40" x2="324.91" y2="166.20" stroke="#f23645" stroke-width="1.1" stroke-opacity="0.55"/>
<rect x="324.16" y="158.50" width="1.5" height="6.00" fill="#f23645"/>
<line x1="326.79" y1="163.79" x2="326.79" y2="170.13" stroke="#f23645" stroke-width="1.1" stroke-opacity="0.55"/>
<rect x="326.04" y="164.50" width="1.5" height="5.00" fill="#f23645"/>
<line x1="328.67" y1="168.83" x2="328.67" y2="181.83" stroke="#f23645" stroke-width="1.1" stroke-opacity="0.55"/>
<rect x="327.92" y="169.50" width="1.5" height="10.30" fill="#f23645"/>
<line x1="330.55" y1="176.65" x2="330.55" y2="181.00" stroke="#22ab94" stroke-width="1.1" stroke-opacity="0.55"/>
<rect x="329.80" y="178.50" width="1.5" height="1.30" fill="#22ab94"/>
<line x1="332.43" y1="177.84" x2="332.43" y2="185.30" stroke="#f23645" stroke-width="1.1" stroke-opacity="0.55"/>
<rect x="331.68" y="178.50" width="1.5" height="1.00" fill="#f23645"/>
<line x1="334.31" y1="175.61" x2="334.31" y2="181.66" stroke="#22ab94" stroke-width="1.1" stroke-opacity="0.55"/>
<rect x="333.56" y="177.50" width="1.5" height="2.00" fill="#22ab94"/>
<line x1="336.19" y1="172.50" x2="336.19" y2="181.08" stroke="#f23645" stroke-width="1.1" stroke-opacity="0.55"/>
<rect x="335.44" y="177.50" width="1.5" height="2.00" fill="#f23645"/>
<line x1="338.07" y1="178.47" x2="338.07" y2="184.79" stroke="#f23645" stroke-width="1.1" stroke-opacity="0.55"/>
<rect x="337.32" y="179.50" width="1.5" height="3.90" fill="#f23645"/>
<line x1="339.95" y1="182.76" x2="339.95" y2="194.50" stroke="#f23645" stroke-width="1.1" stroke-opacity="0.55"/>
<rect x="339.20" y="183.40" width="1.5" height="9.10" fill="#f23645"/>
<line x1="341.84" y1="186.07" x2="341.84" y2="194.65" stroke="#22ab94" stroke-width="1.1" stroke-opacity="0.55"/>
<rect x="341.09" y="186.50" width="1.5" height="6.00" fill="#22ab94"/>
<line x1="343.72" y1="182.43" x2="343.72" y2="187.85" stroke="#22ab94" stroke-width="1.1" stroke-opacity="0.55"/>
<rect x="342.97" y="184.00" width="1.5" height="2.50" fill="#22ab94"/>
<line x1="345.60" y1="181.92" x2="345.60" y2="185.68" stroke="#f23645" stroke-width="1.1" stroke-opacity="0.55"/>
<rect x="344.85" y="184.00" width="1.5" height="0.60" fill="#f23645"/>
<line x1="347.48" y1="173.53" x2="347.48" y2="186.39" stroke="#22ab94" stroke-width="1.1" stroke-opacity="0.55"/>
<rect x="346.73" y="175.50" width="1.5" height="9.00" fill="#22ab94"/>
<line x1="349.36" y1="169.82" x2="349.36" y2="176.35" stroke="#22ab94" stroke-width="1.1" stroke-opacity="0.55"/>
<rect x="348.61" y="170.60" width="1.5" height="4.90" fill="#22ab94"/>
<line x1="351.24" y1="167.90" x2="351.24" y2="176.93" stroke="#f23645" stroke-width="1.1" stroke-opacity="0.55"/>
<rect x="350.49" y="170.60" width="1.5" height="5.40" fill="#f23645"/>
<line x1="353.12" y1="175.17" x2="353.12" y2="185.86" stroke="#f23645" stroke-width="1.1" stroke-opacity="0.55"/>
<rect x="352.37" y="176.00" width="1.5" height="8.40" fill="#f23645"/>
<line x1="355.00" y1="183.53" x2="355.00" y2="194.40" stroke="#f23645" stroke-width="1.1" stroke-opacity="0.55"/>
<rect x="354.25" y="184.40" width="1.5" height="5.40" fill="#f23645"/>
<line x1="356.88" y1="188.65" x2="356.88" y2="191.14" stroke="#f23645" stroke-width="1.1" stroke-opacity="0.55"/>
<rect x="356.13" y="189.80" width="1.5" height="0.70" fill="#f23645"/>
<line x1="358.76" y1="181.46" x2="358.76" y2="191.54" stroke="#22ab94" stroke-width="1.1" stroke-opacity="0.55"/>
<rect x="358.01" y="183.50" width="1.5" height="7.00" fill="#22ab94"/>
<line x1="360.65" y1="177.00" x2="360.65" y2="187.72" stroke="#f23645" stroke-width="1.1" stroke-opacity="0.55"/>
<rect x="359.90" y="183.50" width="1.5" height="3.00" fill="#f23645"/>
<line x1="362.53" y1="185.05" x2="362.53" y2="191.03" stroke="#f23645" stroke-width="1.1" stroke-opacity="0.55"/>
<rect x="361.78" y="186.50" width="1.5" height="2.50" fill="#f23645"/>
<line x1="364.41" y1="187.84" x2="364.41" y2="191.55" stroke="#f23645" stroke-width="1.1" stroke-opacity="0.55"/>
<rect x="363.66" y="189.00" width="1.5" height="0.60" fill="#f23645"/>
<line x1="366.29" y1="188.20" x2="366.29" y2="191.86" stroke="#f23645" stroke-width="1.1" stroke-opacity="0.55"/>
<rect x="365.54" y="189.50" width="1.5" height="1.00" fill="#f23645"/>
<line x1="368.17" y1="189.16" x2="368.17" y2="196.43" stroke="#f23645" stroke-width="1.1" stroke-opacity="0.55"/>
<rect x="367.42" y="190.50" width="1.5" height="5.50" fill="#f23645"/>
<line x1="370.05" y1="194.81" x2="370.05" y2="203.33" stroke="#f23645" stroke-width="1.1" stroke-opacity="0.55"/>
<rect x="369.30" y="196.00" width="1.5" height="6.60" fill="#f23645"/>
<line x1="371.93" y1="202.19" x2="371.93" y2="210.00" stroke="#f23645" stroke-width="1.1" stroke-opacity="0.55"/>
<rect x="371.18" y="202.60" width="1.5" height="1.90" fill="#f23645"/>
<line x1="373.81" y1="188.66" x2="373.81" y2="205.21" stroke="#22ab94" stroke-width="1.1" stroke-opacity="0.55"/>
<rect x="373.06" y="190.50" width="1.5" height="14.00" fill="#22ab94"/>
<line x1="375.69" y1="189.00" x2="375.69" y2="192.60" stroke="#22ab94" stroke-width="1.1" stroke-opacity="0.55"/>
<rect x="374.94" y="190.00" width="1.5" height="0.60" fill="#22ab94"/>
<line x1="377.57" y1="188.75" x2="377.57" y2="194.71" stroke="#f23645" stroke-width="1.1" stroke-opacity="0.55"/>
<rect x="376.82" y="190.00" width="1.5" height="3.00" fill="#f23645"/>
<line x1="379.46" y1="191.60" x2="379.46" y2="197.99" stroke="#f23645" stroke-width="1.1" stroke-opacity="0.55"/>
<rect x="378.71" y="193.00" width="1.5" height="4.00" fill="#f23645"/>
<line x1="381.34" y1="192.67" x2="381.34" y2="198.00" stroke="#22ab94" stroke-width="1.1" stroke-opacity="0.55"/>
<rect x="380.59" y="194.00" width="1.5" height="3.00" fill="#22ab94"/>
<line x1="383.22" y1="183.60" x2="383.22" y2="195.81" stroke="#22ab94" stroke-width="1.1" stroke-opacity="0.55"/>
<rect x="382.47" y="185.00" width="1.5" height="9.00" fill="#22ab94"/>
<line x1="385.10" y1="181.91" x2="385.10" y2="186.41" stroke="#22ab94" stroke-width="1.1" stroke-opacity="0.55"/>
<rect x="384.35" y="182.50" width="1.5" height="2.50" fill="#22ab94"/>
<line x1="386.98" y1="176.10" x2="386.98" y2="183.35" stroke="#22ab94" stroke-width="1.1" stroke-opacity="0.55"/>
<rect x="386.23" y="180.50" width="1.5" height="2.00" fill="#22ab94"/>
<line x1="388.86" y1="179.60" x2="388.86" y2="191.59" stroke="#f23645" stroke-width="1.1" stroke-opacity="0.55"/>
<rect x="388.11" y="180.50" width="1.5" height="9.30" fill="#f23645"/>
<line x1="390.74" y1="181.69" x2="390.74" y2="191.21" stroke="#22ab94" stroke-width="1.1" stroke-opacity="0.55"/>
<rect x="389.99" y="183.00" width="1.5" height="6.80" fill="#22ab94"/>
<line x1="392.62" y1="179.00" x2="392.62" y2="185.77" stroke="#f23645" stroke-width="1.1" stroke-opacity="0.55"/>
<rect x="391.87" y="183.00" width="1.5" height="1.00" fill="#f23645"/>
<line x1="394.50" y1="181.96" x2="394.50" y2="191.20" stroke="#f23645" stroke-width="1.1" stroke-opacity="0.55"/>
<rect x="393.75" y="184.00" width="1.5" height="6.00" fill="#f23645"/>
<line x1="396.38" y1="188.00" x2="396.38" y2="191.31" stroke="#22ab94" stroke-width="1.1" stroke-opacity="0.55"/>
<rect x="395.63" y="189.50" width="1.5" height="0.60" fill="#22ab94"/>
<line x1="398.27" y1="183.18" x2="398.27" y2="191.15" stroke="#22ab94" stroke-width="1.1" stroke-opacity="0.55"/>
<rect x="397.52" y="184.50" width="1.5" height="5.00" fill="#22ab94"/>
<line x1="400.15" y1="183.29" x2="400.15" y2="188.86" stroke="#f23645" stroke-width="1.1" stroke-opacity="0.55"/>
<rect x="399.40" y="184.50" width="1.5" height="3.00" fill="#f23645"/>
<line x1="402.03" y1="183.24" x2="402.03" y2="189.59" stroke="#22ab94" stroke-width="1.1" stroke-opacity="0.55"/>
<rect x="401.28" y="184.50" width="1.5" height="3.00" fill="#22ab94"/>
<line x1="403.91" y1="176.84" x2="403.91" y2="186.48" stroke="#22ab94" stroke-width="1.1" stroke-opacity="0.55"/>
<rect x="403.16" y="178.50" width="1.5" height="6.00" fill="#22ab94"/>
<line x1="405.79" y1="168.90" x2="405.79" y2="179.37" stroke="#22ab94" stroke-width="1.1" stroke-opacity="0.55"/>
<rect x="405.04" y="171.00" width="1.5" height="7.50" fill="#22ab94"/>
<line x1="407.67" y1="168.00" x2="407.67" y2="175.41" stroke="#f23645" stroke-width="1.1" stroke-opacity="0.55"/>
<rect x="406.92" y="171.00" width="1.5" height="3.00" fill="#f23645"/>
<line x1="409.55" y1="171.90" x2="409.55" y2="178.41" stroke="#f23645" stroke-width="1.1" stroke-opacity="0.55"/>
<rect x="408.80" y="174.00" width="1.5" height="2.50" fill="#f23645"/>
<line x1="411.43" y1="173.85" x2="411.43" y2="177.12" stroke="#22ab94" stroke-width="1.1" stroke-opacity="0.55"/>
<rect x="410.68" y="174.50" width="1.5" height="2.00" fill="#22ab94"/>
<line x1="413.31" y1="168.00" x2="413.31" y2="175.70" stroke="#22ab94" stroke-width="1.1" stroke-opacity="0.55"/>
<rect x="412.56" y="173.50" width="1.5" height="1.00" fill="#22ab94"/>
<line x1="415.19" y1="172.47" x2="415.19" y2="178.00" stroke="#22ab94" stroke-width="1.1" stroke-opacity="0.55"/>
<rect x="414.44" y="173.00" width="1.5" height="0.60" fill="#22ab94"/>
<line x1="417.08" y1="161.17" x2="417.08" y2="173.53" stroke="#22ab94" stroke-width="1.1" stroke-opacity="0.55"/>
<rect x="416.33" y="162.00" width="1.5" height="11.00" fill="#22ab94"/>
<line x1="418.96" y1="157.39" x2="418.96" y2="163.81" stroke="#22ab94" stroke-width="1.1" stroke-opacity="0.55"/>
<rect x="418.21" y="159.00" width="1.5" height="3.00" fill="#22ab94"/>
<line x1="420.84" y1="152.50" x2="420.84" y2="161.01" stroke="#22ab94" stroke-width="1.1" stroke-opacity="0.55"/>
<rect x="420.09" y="158.50" width="1.5" height="0.60" fill="#22ab94"/>
<line x1="422.72" y1="157.82" x2="422.72" y2="161.60" stroke="#f23645" stroke-width="1.1" stroke-opacity="0.55"/>
<rect x="421.97" y="158.50" width="1.5" height="0.60" fill="#f23645"/>
<line x1="424.60" y1="153.31" x2="424.60" y2="160.29" stroke="#22ab94" stroke-width="1.1" stroke-opacity="0.55"/>
<rect x="423.85" y="155.00" width="1.5" height="3.70" fill="#22ab94"/>
<line x1="426.48" y1="137.00" x2="426.48" y2="155.66" stroke="#22ab94" stroke-width="1.1" stroke-opacity="0.55"/>
<rect x="425.73" y="141.00" width="1.5" height="14.00" fill="#22ab94"/>
<line x1="428.36" y1="128.51" x2="428.36" y2="143.14" stroke="#22ab94" stroke-width="1.1" stroke-opacity="0.55"/>
<rect x="427.61" y="130.50" width="1.5" height="10.50" fill="#22ab94"/>
<line x1="430.24" y1="129.70" x2="430.24" y2="148.61" stroke="#f23645" stroke-width="1.1" stroke-opacity="0.55"/>
<rect x="429.49" y="130.50" width="1.5" height="16.00" fill="#f23645"/>
<line x1="432.12" y1="145.38" x2="432.12" y2="151.88" stroke="#f23645" stroke-width="1.1" stroke-opacity="0.55"/>
<rect x="431.37" y="146.50" width="1.5" height="4.10" fill="#f23645"/>
<line x1="434.00" y1="147.82" x2="434.00" y2="159.80" stroke="#22ab94" stroke-width="1.1" stroke-opacity="0.55"/>
<rect x="433.25" y="150.00" width="1.5" height="0.60" fill="#22ab94"/>
<line x1="435.89" y1="147.10" x2="435.89" y2="150.69" stroke="#22ab94" stroke-width="1.1" stroke-opacity="0.55"/>
<rect x="435.14" y="149.00" width="1.5" height="1.00" fill="#22ab94"/>
<line x1="437.77" y1="146.32" x2="437.77" y2="150.33" stroke="#22ab94" stroke-width="1.1" stroke-opacity="0.55"/>
<rect x="437.02" y="147.50" width="1.5" height="1.50" fill="#22ab94"/>
<line x1="439.65" y1="141.50" x2="439.65" y2="154.41" stroke="#f23645" stroke-width="1.1" stroke-opacity="0.55"/>
<rect x="438.90" y="147.50" width="1.5" height="5.90" fill="#f23645"/>
<line x1="441.53" y1="152.65" x2="441.53" y2="156.97" stroke="#f23645" stroke-width="1.1" stroke-opacity="0.55"/>
<rect x="440.78" y="153.40" width="1.5" height="2.60" fill="#f23645"/>
<line x1="443.41" y1="154.30" x2="443.41" y2="159.34" stroke="#f23645" stroke-width="1.1" stroke-opacity="0.55"/>
<rect x="442.66" y="156.00" width="1.5" height="2.90" fill="#f23645"/>
<line x1="445.29" y1="157.50" x2="445.29" y2="166.19" stroke="#f23645" stroke-width="1.1" stroke-opacity="0.55"/>
<rect x="444.54" y="158.90" width="1.5" height="6.10" fill="#f23645"/>
<line x1="447.17" y1="164.57" x2="447.17" y2="174.50" stroke="#f23645" stroke-width="1.1" stroke-opacity="0.55"/>
<rect x="446.42" y="165.00" width="1.5" height="8.50" fill="#f23645"/>
<line x1="449.05" y1="171.98" x2="449.05" y2="180.00" stroke="#f23645" stroke-width="1.1" stroke-opacity="0.55"/>
<rect x="448.30" y="173.50" width="1.5" height="4.50" fill="#f23645"/>
<line x1="450.93" y1="172.68" x2="450.93" y2="178.52" stroke="#22ab94" stroke-width="1.1" stroke-opacity="0.55"/>
<rect x="450.18" y="174.00" width="1.5" height="4.00" fill="#22ab94"/>
<line x1="452.81" y1="165.33" x2="452.81" y2="175.82" stroke="#22ab94" stroke-width="1.1" stroke-opacity="0.55"/>
<rect x="452.06" y="167.50" width="1.5" height="6.50" fill="#22ab94"/>
<line x1="454.70" y1="165.00" x2="454.70" y2="174.65" stroke="#f23645" stroke-width="1.1" stroke-opacity="0.55"/>
<rect x="453.95" y="167.50" width="1.5" height="5.00" fill="#f23645"/>
<line x1="456.58" y1="167.41" x2="456.58" y2="173.38" stroke="#22ab94" stroke-width="1.1" stroke-opacity="0.55"/>
<rect x="455.83" y="168.00" width="1.5" height="4.50" fill="#22ab94"/>
<line x1="458.46" y1="161.03" x2="458.46" y2="169.80" stroke="#22ab94" stroke-width="1.1" stroke-opacity="0.55"/>
<rect x="457.71" y="161.50" width="1.5" height="6.50" fill="#22ab94"/>
<line x1="460.34" y1="157.61" x2="460.34" y2="162.13" stroke="#22ab94" stroke-width="1.1" stroke-opacity="0.55"/>
<rect x="459.59" y="158.50" width="1.5" height="3.00" fill="#22ab94"/>
<line x1="462.22" y1="154.64" x2="462.22" y2="160.54" stroke="#22ab94" stroke-width="1.1" stroke-opacity="0.55"/>
<rect x="461.47" y="155.80" width="1.5" height="2.70" fill="#22ab94"/>
<line x1="464.10" y1="151.63" x2="464.10" y2="156.67" stroke="#22ab94" stroke-width="1.1" stroke-opacity="0.55"/>
<rect x="463.35" y="153.50" width="1.5" height="2.30" fill="#22ab94"/>
<line x1="465.98" y1="150.30" x2="465.98" y2="162.17" stroke="#f23645" stroke-width="1.1" stroke-opacity="0.55"/>
<rect x="465.23" y="153.50" width="1.5" height="8.00" fill="#f23645"/>
<line x1="467.86" y1="140.95" x2="467.86" y2="162.93" stroke="#22ab94" stroke-width="1.1" stroke-opacity="0.55"/>
<rect x="467.11" y="143.00" width="1.5" height="18.50" fill="#22ab94"/>
<line x1="469.74" y1="132.34" x2="469.74" y2="143.56" stroke="#22ab94" stroke-width="1.1" stroke-opacity="0.55"/>
<rect x="468.99" y="134.00" width="1.5" height="9.00" fill="#22ab94"/>
<line x1="471.62" y1="126.50" x2="471.62" y2="145.00" stroke="#f23645" stroke-width="1.1" stroke-opacity="0.55"/>
<rect x="470.88" y="134.00" width="1.5" height="10.50" fill="#f23645"/>
<line x1="473.51" y1="138.40" x2="473.51" y2="153.14" stroke="#f23645" stroke-width="1.1" stroke-opacity="0.55"/>
<rect x="472.76" y="144.50" width="1.5" height="7.00" fill="#f23645"/>
<line x1="475.39" y1="144.83" x2="475.39" y2="152.03" stroke="#22ab94" stroke-width="1.1" stroke-opacity="0.55"/>
<rect x="474.64" y="146.00" width="1.5" height="5.50" fill="#22ab94"/>
<line x1="477.27" y1="141.00" x2="477.27" y2="148.09" stroke="#22ab94" stroke-width="1.1" stroke-opacity="0.55"/>
<rect x="476.52" y="145.00" width="1.5" height="1.00" fill="#22ab94"/>
<line x1="479.15" y1="143.46" x2="479.15" y2="155.84" stroke="#f23645" stroke-width="1.1" stroke-opacity="0.55"/>
<rect x="478.40" y="145.00" width="1.5" height="9.00" fill="#f23645"/>
<line x1="481.03" y1="153.45" x2="481.03" y2="162.24" stroke="#f23645" stroke-width="1.1" stroke-opacity="0.55"/>
<rect x="480.28" y="154.00" width="1.5" height="6.30" fill="#f23645"/>
<line x1="482.91" y1="147.98" x2="482.91" y2="162.25" stroke="#22ab94" stroke-width="1.1" stroke-opacity="0.55"/>
<rect x="482.16" y="148.50" width="1.5" height="11.80" fill="#22ab94"/>
<line x1="484.79" y1="147.28" x2="484.79" y2="157.51" stroke="#f23645" stroke-width="1.1" stroke-opacity="0.55"/>
<rect x="484.04" y="148.50" width="1.5" height="8.00" fill="#f23645"/>
<line x1="486.67" y1="134.60" x2="486.67" y2="158.50" stroke="#22ab94" stroke-width="1.1" stroke-opacity="0.55"/>
<rect x="485.92" y="136.00" width="1.5" height="20.50" fill="#22ab94"/>
<line x1="488.55" y1="128.93" x2="488.55" y2="136.88" stroke="#22ab94" stroke-width="1.1" stroke-opacity="0.55"/>
<rect x="487.80" y="131.00" width="1.5" height="5.00" fill="#22ab94"/>
<line x1="490.44" y1="128.30" x2="490.44" y2="131.63" stroke="#22ab94" stroke-width="1.1" stroke-opacity="0.55"/>
<rect x="489.69" y="130.50" width="1.5" height="0.60" fill="#22ab94"/>
<line x1="492.32" y1="123.00" x2="492.32" y2="151.35" stroke="#f23645" stroke-width="1.1" stroke-opacity="0.55"/>
<rect x="491.57" y="130.50" width="1.5" height="19.50" fill="#f23645"/>
<line x1="494.20" y1="139.17" x2="494.20" y2="150.60" stroke="#22ab94" stroke-width="1.1" stroke-opacity="0.55"/>
<rect x="493.45" y="140.00" width="1.5" height="10.00" fill="#22ab94"/>
<line x1="496.08" y1="131.31" x2="496.08" y2="140.49" stroke="#22ab94" stroke-width="1.1" stroke-opacity="0.55"/>
<rect x="495.33" y="132.00" width="1.5" height="8.00" fill="#22ab94"/>
<line x1="497.96" y1="119.20" x2="497.96" y2="132.76" stroke="#22ab94" stroke-width="1.1" stroke-opacity="0.55"/>
<rect x="497.21" y="121.00" width="1.5" height="11.00" fill="#22ab94"/>
<line x1="499.84" y1="118.30" x2="499.84" y2="133.96" stroke="#f23645" stroke-width="1.1" stroke-opacity="0.55"/>
<rect x="499.09" y="121.00" width="1.5" height="12.00" fill="#f23645"/>
<line x1="501.72" y1="132.05" x2="501.72" y2="136.27" stroke="#f23645" stroke-width="1.1" stroke-opacity="0.55"/>
<rect x="500.97" y="133.00" width="1.5" height="1.50" fill="#f23645"/>
<line x1="503.60" y1="133.58" x2="503.60" y2="137.80" stroke="#f23645" stroke-width="1.1" stroke-opacity="0.55"/>
<rect x="502.85" y="134.50" width="1.5" height="2.00" fill="#f23645"/>
<line x1="505.48" y1="135.78" x2="505.48" y2="141.00" stroke="#f23645" stroke-width="1.1" stroke-opacity="0.55"/>
<rect x="504.73" y="136.50" width="1.5" height="2.00" fill="#f23645"/>
<line x1="507.36" y1="125.98" x2="507.36" y2="138.93" stroke="#22ab94" stroke-width="1.1" stroke-opacity="0.55"/>
<rect x="506.61" y="127.00" width="1.5" height="11.50" fill="#22ab94"/>
<line x1="509.25" y1="123.80" x2="509.25" y2="127.85" stroke="#22ab94" stroke-width="1.1" stroke-opacity="0.55"/>
<rect x="508.50" y="126.00" width="1.5" height="1.00" fill="#22ab94"/>
<line x1="511.13" y1="125.57" x2="511.13" y2="135.72" stroke="#f23645" stroke-width="1.1" stroke-opacity="0.55"/>
<rect x="510.38" y="126.00" width="1.5" height="8.00" fill="#f23645"/>
<line x1="513.01" y1="129.80" x2="513.01" y2="135.39" stroke="#22ab94" stroke-width="1.1" stroke-opacity="0.55"/>
<rect x="512.26" y="133.50" width="1.5" height="0.60" fill="#22ab94"/>
<line x1="514.89" y1="132.76" x2="514.89" y2="137.75" stroke="#f23645" stroke-width="1.1" stroke-opacity="0.55"/>
<rect x="514.14" y="133.50" width="1.5" height="3.00" fill="#f23645"/>
<line x1="516.77" y1="127.92" x2="516.77" y2="137.09" stroke="#22ab94" stroke-width="1.1" stroke-opacity="0.55"/>
<rect x="516.02" y="130.00" width="1.5" height="6.50" fill="#22ab94"/>
<line x1="518.65" y1="119.13" x2="518.65" y2="131.18" stroke="#22ab94" stroke-width="1.1" stroke-opacity="0.55"/>
<rect x="517.90" y="121.00" width="1.5" height="9.00" fill="#22ab94"/>
<line x1="520.53" y1="116.71" x2="520.53" y2="122.90" stroke="#22ab94" stroke-width="1.1" stroke-opacity="0.55"/>
<rect x="519.78" y="118.00" width="1.5" height="3.00" fill="#22ab94"/>
<line x1="522.41" y1="110.39" x2="522.41" y2="119.31" stroke="#22ab94" stroke-width="1.1" stroke-opacity="0.55"/>
<rect x="521.66" y="111.50" width="1.5" height="6.50" fill="#22ab94"/>
<line x1="524.29" y1="106.86" x2="524.29" y2="113.67" stroke="#22ab94" stroke-width="1.1" stroke-opacity="0.55"/>
<rect x="523.54" y="108.50" width="1.5" height="3.00" fill="#22ab94"/>
<line x1="526.17" y1="93.98" x2="526.17" y2="110.40" stroke="#22ab94" stroke-width="1.1" stroke-opacity="0.55"/>
<rect x="525.42" y="95.00" width="1.5" height="13.50" fill="#22ab94"/>
<line x1="528.06" y1="92.40" x2="528.06" y2="97.00" stroke="#22ab94" stroke-width="1.1" stroke-opacity="0.55"/>
<rect x="527.31" y="94.50" width="1.5" height="0.60" fill="#22ab94"/>
<line x1="529.94" y1="86.90" x2="529.94" y2="99.17" stroke="#f23645" stroke-width="1.1" stroke-opacity="0.55"/>
<rect x="529.19" y="94.50" width="1.5" height="3.00" fill="#f23645"/>
<line x1="531.82" y1="95.96" x2="531.82" y2="106.00" stroke="#f23645" stroke-width="1.1" stroke-opacity="0.55"/>
<rect x="531.07" y="97.50" width="1.5" height="6.50" fill="#f23645"/>
<line x1="533.70" y1="95.00" x2="533.70" y2="105.13" stroke="#22ab94" stroke-width="1.1" stroke-opacity="0.55"/>
<rect x="532.95" y="99.00" width="1.5" height="5.00" fill="#22ab94"/>
<line x1="535.58" y1="91.47" x2="535.58" y2="99.50" stroke="#22ab94" stroke-width="1.1" stroke-opacity="0.55"/>
<rect x="534.83" y="92.50" width="1.5" height="6.50" fill="#22ab94"/>
<line x1="537.46" y1="83.20" x2="537.46" y2="93.13" stroke="#22ab94" stroke-width="1.1" stroke-opacity="0.55"/>
<rect x="536.71" y="89.00" width="1.5" height="3.50" fill="#22ab94"/>
<line x1="539.34" y1="88.47" x2="539.34" y2="100.73" stroke="#f23645" stroke-width="1.1" stroke-opacity="0.55"/>
<rect x="538.59" y="89.00" width="1.5" height="10.00" fill="#f23645"/>
<line x1="541.22" y1="96.14" x2="541.22" y2="99.69" stroke="#22ab94" stroke-width="1.1" stroke-opacity="0.55"/>
<rect x="540.47" y="97.00" width="1.5" height="2.00" fill="#22ab94"/>
<line x1="543.10" y1="96.45" x2="543.10" y2="102.41" stroke="#f23645" stroke-width="1.1" stroke-opacity="0.55"/>
<rect x="542.35" y="97.00" width="1.5" height="3.50" fill="#f23645"/>
<line x1="544.98" y1="98.53" x2="544.98" y2="121.11" stroke="#f23645" stroke-width="1.1" stroke-opacity="0.55"/>
<rect x="544.23" y="100.50" width="1.5" height="19.00" fill="#f23645"/>
<line x1="546.87" y1="116.00" x2="546.87" y2="123.41" stroke="#f23645" stroke-width="1.1" stroke-opacity="0.55"/>
<rect x="546.12" y="119.50" width="1.5" height="3.00" fill="#f23645"/>
<line x1="548.75" y1="121.66" x2="548.75" y2="127.43" stroke="#f23645" stroke-width="1.1" stroke-opacity="0.55"/>
<rect x="548.00" y="122.50" width="1.5" height="4.00" fill="#f23645"/>
<line x1="550.63" y1="125.27" x2="550.63" y2="144.68" stroke="#f23645" stroke-width="1.1" stroke-opacity="0.55"/>
<rect x="549.88" y="126.50" width="1.5" height="17.50" fill="#f23645"/>
<line x1="552.51" y1="132.30" x2="552.51" y2="145.40" stroke="#22ab94" stroke-width="1.1" stroke-opacity="0.55"/>
<rect x="551.76" y="133.50" width="1.5" height="10.50" fill="#22ab94"/>
<line x1="554.39" y1="132.63" x2="554.39" y2="137.63" stroke="#f23645" stroke-width="1.1" stroke-opacity="0.55"/>
<rect x="553.64" y="133.50" width="1.5" height="2.00" fill="#f23645"/>
<line x1="556.27" y1="124.35" x2="556.27" y2="136.88" stroke="#22ab94" stroke-width="1.1" stroke-opacity="0.55"/>
<rect x="555.52" y="126.50" width="1.5" height="9.00" fill="#22ab94"/>
<line x1="558.15" y1="122.50" x2="558.15" y2="127.84" stroke="#f23645" stroke-width="1.1" stroke-opacity="0.55"/>
<rect x="557.40" y="126.50" width="1.5" height="0.60" fill="#f23645"/>
<line x1="560.03" y1="124.86" x2="560.03" y2="130.46" stroke="#f23645" stroke-width="1.1" stroke-opacity="0.55"/>
<rect x="559.28" y="127.00" width="1.5" height="2.50" fill="#f23645"/>
<line x1="561.91" y1="113.96" x2="561.91" y2="129.90" stroke="#22ab94" stroke-width="1.1" stroke-opacity="0.55"/>
<rect x="561.16" y="115.00" width="1.5" height="14.50" fill="#22ab94"/>
<line x1="563.79" y1="101.91" x2="563.79" y2="116.25" stroke="#22ab94" stroke-width="1.1" stroke-opacity="0.55"/>
<rect x="563.04" y="103.00" width="1.5" height="12.00" fill="#22ab94"/>
<line x1="565.67" y1="99.70" x2="565.67" y2="108.30" stroke="#f23645" stroke-width="1.1" stroke-opacity="0.55"/>
<rect x="564.92" y="103.00" width="1.5" height="4.00" fill="#f23645"/>
<line x1="567.56" y1="106.24" x2="567.56" y2="111.91" stroke="#f23645" stroke-width="1.1" stroke-opacity="0.55"/>
<rect x="566.81" y="107.00" width="1.5" height="3.60" fill="#f23645"/>
<line x1="569.44" y1="99.30" x2="569.44" y2="111.01" stroke="#22ab94" stroke-width="1.1" stroke-opacity="0.55"/>
<rect x="568.69" y="104.00" width="1.5" height="6.60" fill="#22ab94"/>
<line x1="571.32" y1="98.80" x2="571.32" y2="104.88" stroke="#22ab94" stroke-width="1.1" stroke-opacity="0.55"/>
<rect x="570.57" y="101.50" width="1.5" height="2.50" fill="#22ab94"/>
<line x1="573.20" y1="100.94" x2="573.20" y2="116.92" stroke="#f23645" stroke-width="1.1" stroke-opacity="0.55"/>
<rect x="572.45" y="101.50" width="1.5" height="14.30" fill="#f23645"/>
<line x1="575.08" y1="107.52" x2="575.08" y2="116.24" stroke="#22ab94" stroke-width="1.1" stroke-opacity="0.55"/>
<rect x="574.33" y="108.00" width="1.5" height="7.80" fill="#22ab94"/>
<line x1="576.96" y1="107.05" x2="576.96" y2="118.22" stroke="#f23645" stroke-width="1.1" stroke-opacity="0.55"/>
<rect x="576.21" y="108.00" width="1.5" height="9.40" fill="#f23645"/>
<line x1="578.84" y1="112.90" x2="578.84" y2="166.80" stroke="#f23645" stroke-width="1.1" stroke-opacity="0.55"/>
<rect x="578.09" y="117.40" width="1.5" height="32.60" fill="#f23645"/>
<line x1="580.72" y1="148.55" x2="580.72" y2="160.85" stroke="#f23645" stroke-width="1.1" stroke-opacity="0.55"/>
<rect x="579.97" y="150.00" width="1.5" height="9.50" fill="#f23645"/>
<line x1="582.60" y1="137.25" x2="582.60" y2="161.08" stroke="#22ab94" stroke-width="1.1" stroke-opacity="0.55"/>
<rect x="581.85" y="139.00" width="1.5" height="20.50" fill="#22ab94"/>
<line x1="584.49" y1="126.31" x2="584.49" y2="140.98" stroke="#22ab94" stroke-width="1.1" stroke-opacity="0.55"/>
<rect x="583.74" y="128.00" width="1.5" height="11.00" fill="#22ab94"/>
<line x1="586.37" y1="125.60" x2="586.37" y2="144.80" stroke="#f23645" stroke-width="1.1" stroke-opacity="0.55"/>
<rect x="585.62" y="128.00" width="1.5" height="6.50" fill="#f23645"/>
<line x1="588.25" y1="128.00" x2="588.25" y2="144.10" stroke="#f23645" stroke-width="1.1" stroke-opacity="0.55"/>
<rect x="587.50" y="134.50" width="1.5" height="8.50" fill="#f23645"/>
<line x1="590.13" y1="138.50" x2="590.13" y2="151.49" stroke="#f23645" stroke-width="1.1" stroke-opacity="0.55"/>
<rect x="589.38" y="143.00" width="1.5" height="7.50" fill="#f23645"/>
<line x1="592.01" y1="148.33" x2="592.01" y2="160.40" stroke="#f23645" stroke-width="1.1" stroke-opacity="0.55"/>
<rect x="591.26" y="150.50" width="1.5" height="4.50" fill="#f23645"/>
<line x1="593.89" y1="148.33" x2="593.89" y2="156.70" stroke="#22ab94" stroke-width="1.1" stroke-opacity="0.55"/>
<rect x="593.14" y="149.00" width="1.5" height="6.00" fill="#22ab94"/>
<line x1="595.77" y1="144.20" x2="595.77" y2="151.00" stroke="#22ab94" stroke-width="1.1" stroke-opacity="0.55"/>
<rect x="595.02" y="147.50" width="1.5" height="1.50" fill="#22ab94"/>
<line x1="597.65" y1="142.00" x2="597.65" y2="149.06" stroke="#22ab94" stroke-width="1.1" stroke-opacity="0.55"/>
<rect x="596.90" y="145.50" width="1.5" height="2.00" fill="#22ab94"/>
<line x1="599.53" y1="139.40" x2="599.53" y2="151.98" stroke="#f23645" stroke-width="1.1" stroke-opacity="0.55"/>
<rect x="598.78" y="145.50" width="1.5" height="6.00" fill="#f23645"/>
<line x1="601.41" y1="149.60" x2="601.41" y2="158.60" stroke="#f23645" stroke-width="1.1" stroke-opacity="0.55"/>
<rect x="600.66" y="151.50" width="1.5" height="4.50" fill="#f23645"/>
<line x1="603.29" y1="142.99" x2="603.29" y2="157.53" stroke="#22ab94" stroke-width="1.1" stroke-opacity="0.55"/>
<rect x="602.54" y="145.00" width="1.5" height="11.00" fill="#22ab94"/>
<line x1="605.18" y1="139.50" x2="605.18" y2="146.72" stroke="#22ab94" stroke-width="1.1" stroke-opacity="0.55"/>
<rect x="604.43" y="142.30" width="1.5" height="2.70" fill="#22ab94"/>
<line x1="607.06" y1="140.44" x2="607.06" y2="143.15" stroke="#f23645" stroke-width="1.1" stroke-opacity="0.55"/>
<rect x="606.31" y="142.30" width="1.5" height="0.60" fill="#f23645"/>
<line x1="608.94" y1="134.16" x2="608.94" y2="143.81" stroke="#22ab94" stroke-width="1.1" stroke-opacity="0.55"/>
<rect x="608.19" y="135.50" width="1.5" height="7.00" fill="#22ab94"/>
<line x1="610.82" y1="131.10" x2="610.82" y2="139.40" stroke="#f23645" stroke-width="1.1" stroke-opacity="0.55"/>
<rect x="610.07" y="135.50" width="1.5" height="2.00" fill="#f23645"/>
<line x1="612.70" y1="133.00" x2="612.70" y2="144.65" stroke="#f23645" stroke-width="1.1" stroke-opacity="0.55"/>
<rect x="611.95" y="137.50" width="1.5" height="5.30" fill="#f23645"/>
<line x1="614.58" y1="135.00" x2="614.58" y2="144.80" stroke="#f23645" stroke-width="1.1" stroke-opacity="0.55"/>
<rect x="613.83" y="142.80" width="1.5" height="0.60" fill="#f23645"/>
<line x1="616.46" y1="138.00" x2="616.46" y2="155.80" stroke="#f23645" stroke-width="1.1" stroke-opacity="0.55"/>
<rect x="615.71" y="143.00" width="1.5" height="9.00" fill="#f23645"/>
<line x1="618.34" y1="147.61" x2="618.34" y2="153.00" stroke="#22ab94" stroke-width="1.1" stroke-opacity="0.55"/>
<rect x="617.59" y="149.50" width="1.5" height="2.50" fill="#22ab94"/>
<line x1="620.22" y1="149.20" x2="620.22" y2="152.90" stroke="#f23645" stroke-width="1.1" stroke-opacity="0.55"/>
<rect x="619.47" y="149.50" width="1.5" height="1.56" fill="#f23645"/>
<polygon points="7.02,294.83 7.02,294.83 8.90,294.83 10.78,294.83 12.66,294.83 14.54,294.83 16.42,294.83 18.30,294.83 20.18,294.83 22.07,294.83 23.95,294.83 25.83,294.83 27.71,294.83 29.59,294.83 31.47,294.83 33.35,294.83 35.23,294.83 37.11,294.83 38.99,294.83 40.88,294.83 42.76,294.83 44.64,294.83 46.52,294.83 48.40,294.83 50.28,294.83 52.16,294.83 54.04,294.83 55.92,294.83 57.80,294.83 59.69,294.83 61.57,294.83 63.45,294.83 65.33,294.83 67.21,294.83 69.09,294.83 70.97,294.83 72.85,294.83 74.73,294.83 76.61,294.83 78.50,294.83 80.38,288.74 82.26,294.83 84.14,294.83 86.02,294.83 87.90,294.83 89.78,294.83 91.66,294.83 93.54,294.83 95.42,294.83 97.31,294.83 99.19,294.83 101.07,294.83 102.95,294.83 104.83,294.83 106.71,294.83 108.59,294.83 110.47,294.83 112.35,294.83 114.23,294.83 116.12,294.83 118.00,294.83 119.88,294.83 121.76,294.83 123.64,294.83 125.52,294.83 127.40,294.83 129.28,294.83 131.16,294.83 133.04,294.83 134.93,294.83 136.81,294.83 138.69,294.83 140.57,294.83 142.45,294.83 144.33,294.83 146.21,294.83 148.09,294.83 149.97,294.83 151.85,294.83 153.74,294.83 155.62,294.83 157.50,294.83 159.38,294.83 161.26,294.83 163.14,294.83 165.02,294.83 166.90,294.83 168.78,294.83 170.66,294.83 172.55,294.83 174.43,294.83 176.31,294.83 178.19,294.83 180.07,294.83 181.95,294.83 183.83,294.83 185.71,294.83 187.59,294.83 189.47,294.83 191.36,294.83 193.24,294.83 195.12,294.83 197.00,294.83 198.88,294.83 200.76,294.83 202.64,294.83 204.52,294.83 206.40,294.83 208.28,294.83 210.17,294.83 212.05,294.83 213.93,294.83 215.81,294.83 217.69,294.83 219.57,294.83 221.45,294.83 223.33,294.83 225.21,294.83 227.09,294.83 228.98,294.83 230.86,294.83 232.74,294.83 234.62,294.83 236.50,294.83 238.38,294.83 240.26,294.83 242.14,294.83 244.02,294.83 245.91,294.83 247.79,294.83 249.67,294.83 251.55,294.83 253.43,294.83 255.31,294.83 257.19,294.83 259.07,294.83 260.95,294.83 262.83,294.83 264.71,294.83 266.60,294.83 268.48,294.83 270.36,294.83 272.24,294.83 274.12,294.83 276.00,294.83 277.88,294.83 279.76,294.83 281.64,294.83 283.52,294.83 285.41,294.83 287.29,294.50 289.17,284.79 291.05,284.06 292.93,292.15 294.81,294.44 296.69,284.52 298.57,294.83 300.45,294.83 302.33,294.83 304.22,294.83 306.10,294.83 307.98,294.83 309.86,294.83 311.74,294.83 313.62,294.83 315.50,294.83 317.38,294.83 319.26,294.83 321.14,294.83 323.03,294.83 324.91,294.83 326.79,294.83 328.67,294.83 330.55,294.83 332.43,294.83 334.31,294.83 336.19,294.83 338.07,294.83 339.95,294.83 341.84,294.83 343.72,294.83 345.60,294.83 347.48,294.83 349.36,294.83 351.24,294.83 353.12,294.83 355.00,294.83 356.88,294.83 358.76,294.83 360.65,294.83 362.53,294.83 364.41,294.83 366.29,294.83 368.17,294.83 370.05,294.83 371.93,294.83 373.81,294.83 375.69,294.83 377.57,294.83 379.46,294.83 381.34,294.83 383.22,294.83 385.10,294.83 386.98,294.83 388.86,294.83 390.74,294.83 392.62,294.83 394.50,294.83 396.38,294.83 398.27,294.83 400.15,294.83 402.03,294.83 403.91,294.83 405.79,294.83 407.67,294.83 409.55,294.83 411.43,294.83 413.31,294.83 415.19,294.83 417.08,294.83 418.96,294.83 420.84,294.83 422.72,294.83 424.60,293.28 426.48,281.74 428.36,275.70 430.24,294.83 432.12,294.83 434.00,294.83 435.89,294.83 437.77,294.83 439.65,294.83 441.53,294.83 443.41,294.83 445.29,294.83 447.17,294.83 449.05,294.83 450.93,294.83 452.81,294.83 454.70,294.83 456.58,294.83 458.46,294.83 460.34,294.83 462.22,294.83 464.10,294.83 465.98,294.83 467.86,294.83 469.74,294.83 471.62,294.83 473.51,294.83 475.39,294.83 477.27,294.83 479.15,294.83 481.03,294.83 482.91,294.83 484.79,294.83 486.67,294.83 488.55,294.83 490.44,294.83 492.32,294.83 494.20,294.83 496.08,294.83 497.96,294.83 499.84,294.83 501.72,294.83 503.60,294.83 505.48,294.83 507.36,294.83 509.25,294.83 511.13,294.83 513.01,294.83 514.89,294.83 516.77,294.83 518.65,294.83 520.53,294.83 522.41,294.83 524.29,294.83 526.17,293.79 528.06,293.50 529.94,294.83 531.82,294.83 533.70,294.83 535.58,294.83 537.46,294.83 539.34,294.83 541.22,294.83 543.10,294.83 544.98,294.83 546.87,294.83 548.75,294.83 550.63,294.83 552.51,294.83 554.39,294.83 556.27,294.83 558.15,294.83 560.03,294.83 561.91,294.83 563.79,294.83 565.67,294.83 567.56,294.83 569.44,294.83 571.32,294.83 573.20,294.83 575.08,294.83 576.96,294.83 578.84,294.83 580.72,294.83 582.60,294.83 584.49,294.83 586.37,294.83 588.25,294.83 590.13,294.83 592.01,294.83 593.89,294.83 595.77,294.83 597.65,294.83 599.53,294.83 601.41,294.83 603.29,294.83 605.18,294.83 607.06,294.83 608.94,294.83 610.82,294.83 612.70,294.83 614.58,294.83 616.46,294.83 618.34,294.83 620.22,294.83 620.22,294.83" fill="#4caf50" fill-opacity="0.28"/>
<polygon points="7.02,363.44 7.02,363.44 8.90,363.44 10.78,363.44 12.66,363.44 14.54,363.44 16.42,363.44 18.30,363.44 20.18,363.44 22.07,363.44 23.95,363.44 25.83,363.44 27.71,363.44 29.59,363.44 31.47,363.44 33.35,363.44 35.23,363.44 37.11,363.44 38.99,363.44 40.88,363.44 42.76,363.44 44.64,363.44 46.52,363.44 48.40,363.44 50.28,363.44 52.16,363.44 54.04,363.44 55.92,363.44 57.80,363.44 59.69,363.44 61.57,363.44 63.45,363.44 65.33,363.44 67.21,363.44 69.09,363.44 70.97,363.44 72.85,363.44 74.73,363.44 76.61,363.44 78.50,363.44 80.38,363.44 82.26,363.44 84.14,363.44 86.02,363.44 87.90,363.44 89.78,363.44 91.66,363.44 93.54,363.44 95.42,363.44 97.31,363.44 99.19,363.44 101.07,363.44 102.95,363.44 104.83,363.44 106.71,363.44 108.59,363.44 110.47,363.44 112.35,363.44 114.23,363.44 116.12,363.44 118.00,363.44 119.88,363.44 121.76,363.44 123.64,363.44 125.52,363.44 127.40,363.44 129.28,363.44 131.16,363.44 133.04,363.44 134.93,363.44 136.81,363.44 138.69,363.44 140.57,363.44 142.45,363.44 144.33,363.44 146.21,363.44 148.09,363.44 149.97,371.46 151.85,365.80 153.74,370.07 155.62,367.49 157.50,363.44 159.38,363.44 161.26,363.44 163.14,363.44 165.02,363.44 166.90,363.44 168.78,363.44 170.66,363.44 172.55,363.44 174.43,363.44 176.31,363.44 178.19,363.44 180.07,363.44 181.95,363.44 183.83,363.44 185.71,363.44 187.59,363.44 189.47,363.44 191.36,363.44 193.24,363.44 195.12,363.44 197.00,363.44 198.88,363.44 200.76,363.44 202.64,363.44 204.52,363.44 206.40,363.44 208.28,363.44 210.17,363.44 212.05,363.44 213.93,363.44 215.81,363.44 217.69,363.44 219.57,363.44 221.45,363.44 223.33,363.44 225.21,363.44 227.09,363.44 228.98,363.44 230.86,363.44 232.74,363.44 234.62,363.44 236.50,363.44 238.38,363.44 240.26,363.44 242.14,363.44 244.02,363.44 245.91,363.44 247.79,363.44 249.67,363.44 251.55,363.44 253.43,363.44 255.31,363.44 257.19,363.44 259.07,363.44 260.95,363.44 262.83,363.44 264.71,363.44 266.60,363.44 268.48,363.44 270.36,363.44 272.24,363.44 274.12,363.44 276.00,363.44 277.88,363.44 279.76,363.44 281.64,363.44 283.52,363.44 285.41,363.44 287.29,363.44 289.17,363.44 291.05,363.44 292.93,363.44 294.81,363.44 296.69,363.44 298.57,363.44 300.45,363.44 302.33,363.44 304.22,363.44 306.10,363.44 307.98,363.44 309.86,363.44 311.74,363.44 313.62,363.44 315.50,363.44 317.38,363.44 319.26,363.44 321.14,363.44 323.03,363.44 324.91,363.44 326.79,363.44 328.67,363.44 330.55,363.44 332.43,363.44 334.31,363.44 336.19,363.44 338.07,363.44 339.95,363.44 341.84,363.44 343.72,363.44 345.60,363.44 347.48,363.44 349.36,363.44 351.24,363.44 353.12,363.44 355.00,363.44 356.88,363.44 358.76,363.44 360.65,363.44 362.53,363.44 364.41,363.44 366.29,363.44 368.17,363.44 370.05,363.44 371.93,363.44 373.81,363.44 375.69,363.44 377.57,363.44 379.46,363.44 381.34,363.44 383.22,363.44 385.10,363.44 386.98,363.44 388.86,363.44 390.74,363.44 392.62,363.44 394.50,363.44 396.38,363.44 398.27,363.44 400.15,363.44 402.03,363.44 403.91,363.44 405.79,363.44 407.67,363.44 409.55,363.44 411.43,363.44 413.31,363.44 415.19,363.44 417.08,363.44 418.96,363.44 420.84,363.44 422.72,363.44 424.60,363.44 426.48,363.44 428.36,363.44 430.24,363.44 432.12,363.44 434.00,363.44 435.89,363.44 437.77,363.44 439.65,363.44 441.53,363.44 443.41,363.44 445.29,363.44 447.17,363.44 449.05,363.44 450.93,363.44 452.81,363.44 454.70,363.44 456.58,363.44 458.46,363.44 460.34,363.44 462.22,363.44 464.10,363.44 465.98,363.44 467.86,363.44 469.74,363.44 471.62,363.44 473.51,363.44 475.39,363.44 477.27,363.44 479.15,363.44 481.03,363.44 482.91,363.44 484.79,363.44 486.67,363.44 488.55,363.44 490.44,363.44 492.32,363.44 494.20,363.44 496.08,363.44 497.96,363.44 499.84,363.44 501.72,363.44 503.60,363.44 505.48,363.44 507.36,363.44 509.25,363.44 511.13,363.44 513.01,363.44 514.89,363.44 516.77,363.44 518.65,363.44 520.53,363.44 522.41,363.44 524.29,363.44 526.17,363.44 528.06,363.44 529.94,363.44 531.82,363.44 533.70,363.44 535.58,363.44 537.46,363.44 539.34,363.44 541.22,363.44 543.10,363.44 544.98,363.44 546.87,363.44 548.75,363.44 550.63,363.44 552.51,363.44 554.39,363.44 556.27,363.44 558.15,363.44 560.03,363.44 561.91,363.44 563.79,363.44 565.67,363.44 567.56,363.44 569.44,363.44 571.32,363.44 573.20,363.44 575.08,363.44 576.96,363.44 578.84,363.44 580.72,363.44 582.60,363.44 584.49,363.44 586.37,363.44 588.25,363.44 590.13,363.44 592.01,363.44 593.89,363.44 595.77,363.44 597.65,363.44 599.53,363.44 601.41,363.44 603.29,363.44 605.18,363.44 607.06,363.44 608.94,363.44 610.82,363.44 612.70,363.44 614.58,363.44 616.46,363.44 618.34,363.44 620.22,363.44 620.22,363.44" fill="#f23645" fill-opacity="0.28"/>
<polyline points="7.02,337.36 8.90,325.49 10.78,328.43 12.66,330.42 14.54,333.46 16.42,329.04 18.30,336.31 20.18,326.56 22.07,343.57 23.95,354.17 25.83,349.91 27.71,357.62 29.59,358.18 31.47,348.28 33.35,341.21 35.23,339.23 37.11,346.69 38.99,348.79 40.88,340.21 42.76,343.35 44.64,343.75 46.52,344.60 48.40,339.05 50.28,325.12 52.16,317.11 54.04,318.80 55.92,320.55 57.80,315.80 59.69,331.78 61.57,337.35 63.45,345.68 65.33,342.81 67.21,344.51 69.09,343.24 70.97,348.20 72.85,342.68 74.73,322.96 76.61,316.42 78.50,310.84 80.38,288.74 82.26,298.17 84.14,307.28 86.02,303.26 87.90,299.72 89.78,304.56 91.66,302.87 93.54,302.48 95.42,317.66 97.31,322.78 99.19,328.49 101.07,322.11 102.95,317.53 104.83,326.86 106.71,337.41 108.59,345.89 110.47,335.79 112.35,341.84 114.23,345.83 116.12,350.68 118.00,347.19 119.88,342.01 121.76,341.57 123.64,341.10 125.52,343.67 127.40,344.79 129.28,345.96 131.16,339.07 133.04,343.79 134.93,348.86 136.81,356.47 138.69,361.72 140.57,360.39 142.45,352.46 144.33,357.04 146.21,353.04 148.09,356.01 149.97,371.46 151.85,365.80 153.74,370.07 155.62,367.49 157.50,355.22 159.38,358.24 161.26,326.88 163.14,347.54 165.02,344.70 166.90,342.51 168.78,345.21 170.66,347.64 172.55,349.02 174.43,354.60 176.31,358.97 178.19,350.60 180.07,347.01 181.95,351.04 183.83,340.80 185.71,339.94 187.59,345.54 189.47,344.59 191.36,347.64 193.24,336.50 195.12,341.97 197.00,341.48 198.88,338.92 200.76,336.30 202.64,326.93 204.52,324.16 206.40,331.14 208.28,331.63 210.17,340.15 212.05,343.39 213.93,342.51 215.81,341.85 217.69,338.43 219.57,348.82 221.45,349.28 223.33,341.93 225.21,344.56 227.09,358.89 228.98,354.46 230.86,356.86 232.74,336.88 234.62,341.95 236.50,332.33 238.38,321.68 240.26,326.35 242.14,323.94 244.02,328.79 245.91,324.15 247.79,320.63 249.67,321.26 251.55,317.03 253.43,319.13 255.31,320.29 257.19,306.54 259.07,303.91 260.95,303.46 262.83,306.91 264.71,310.39 266.60,310.16 268.48,312.45 270.36,315.39 272.24,313.94 274.12,308.31 276.00,314.76 277.88,317.92 279.76,322.13 281.64,319.46 283.52,318.55 285.41,315.74 287.29,294.50 289.17,284.79 291.05,284.06 292.93,292.15 294.81,294.44 296.69,284.52 298.57,297.43 300.45,312.50 302.33,311.96 304.22,316.15 306.10,310.28 307.98,315.46 309.86,311.81 311.74,309.41 313.62,303.20 315.50,312.62 317.38,311.38 319.26,316.13 321.14,310.80 323.03,309.50 324.91,321.20 326.79,329.69 328.67,343.95 330.55,341.71 332.43,343.04 334.31,339.30 336.19,342.23 338.07,347.71 339.95,358.41 341.84,346.73 343.72,342.22 345.60,342.90 347.48,327.69 349.36,320.76 351.24,329.13 353.12,340.25 355.00,346.39 356.88,347.17 358.76,335.85 360.65,339.64 362.53,342.75 364.41,343.38 366.29,344.71 368.17,351.68 370.05,358.87 371.93,360.77 373.81,335.80 375.69,335.05 377.57,339.03 379.46,344.10 381.34,338.94 383.22,325.39 385.10,322.05 386.98,319.38 388.86,333.24 390.74,324.03 392.62,325.48 394.50,333.85 396.38,333.09 398.27,325.71 400.15,330.21 402.03,325.73 403.91,317.50 405.79,308.71 407.67,313.87 409.55,318.09 411.43,315.50 413.31,314.17 415.19,313.48 417.08,300.27 418.96,297.29 420.84,296.78 422.72,297.26 424.60,293.28 426.48,281.74 428.36,275.70 430.24,304.27 432.12,310.20 434.00,309.64 435.89,308.66 437.77,307.14 439.65,316.84 441.53,320.86 443.41,325.28 445.29,333.89 447.17,344.10 449.05,348.85 450.93,342.49 452.81,333.02 454.70,339.02 456.58,332.68 458.46,324.33 460.34,320.73 462.22,317.54 464.10,314.84 465.98,326.87 467.86,307.63 469.74,300.71 471.62,314.32 473.51,322.25 475.39,317.32 477.27,316.42 479.15,326.76 481.03,333.22 482.91,321.64 484.79,329.66 486.67,313.12 488.55,309.77 490.44,309.43 492.32,328.15 494.20,320.58 496.08,315.07 497.96,308.21 499.84,318.99 501.72,320.28 503.60,322.06 505.48,323.92 507.36,315.06 509.25,314.33 511.13,322.45 513.01,322.02 514.89,325.15 516.77,319.19 518.65,311.75 520.53,309.42 522.41,304.56 524.29,302.41 526.17,293.79 528.06,293.50 529.94,297.87 531.82,306.96 533.70,303.11 535.58,298.46 537.46,296.07 539.34,310.03 541.22,308.39 543.10,313.12 544.98,334.11 546.87,336.85 548.75,340.47 550.63,353.82 552.51,342.35 554.39,343.86 556.27,334.64 558.15,335.07 560.03,337.36 561.91,323.12 563.79,313.64 565.67,317.78 567.56,321.49 569.44,316.02 571.32,314.00 573.20,328.75 575.08,322.00 576.96,330.64 578.84,352.38 580.72,357.06 582.60,340.21 584.49,332.57 586.37,336.50 588.25,341.45 590.13,345.60 592.01,348.05 593.89,343.00 595.77,341.73 597.65,339.95 599.53,344.08 601.41,347.10 603.29,336.64 605.18,334.22 607.06,334.38 608.94,327.80 610.82,329.70 612.70,334.68 614.58,334.87 616.46,343.12 618.34,340.14 620.22,341.61" fill="none" stroke="#7e57c2" stroke-width="1.15" stroke-linejoin="round"/>
<polyline points="7.02,321.20 8.90,322.27 10.78,323.85 12.66,325.71 14.54,327.12 16.42,327.34 18.30,328.60 20.18,328.69 22.07,330.55 23.95,332.77 25.83,334.91 27.71,337.06 29.59,338.87 31.47,339.91 33.35,340.19 35.23,341.17 37.11,342.48 38.99,343.79 40.88,344.27 42.76,345.29 44.64,345.82 46.52,347.11 48.40,346.79 50.28,344.71 52.16,342.37 54.04,339.60 55.92,336.91 57.80,334.59 59.69,333.92 61.57,333.78 63.45,333.71 65.33,333.28 67.21,333.59 69.09,333.58 70.97,333.90 72.85,333.76 74.73,332.61 76.61,331.99 78.50,331.55 80.38,329.40 82.26,327.80 84.14,327.19 86.02,325.15 87.90,322.46 89.78,319.53 91.66,316.67 93.54,313.67 95.42,311.85 97.31,310.03 99.19,309.02 101.07,308.96 102.95,309.03 104.83,310.18 106.71,313.66 108.59,317.06 110.47,319.10 112.35,321.86 114.23,325.15 116.12,328.44 118.00,331.61 119.88,334.43 121.76,336.14 123.64,337.45 125.52,338.53 127.40,340.15 129.28,342.19 131.16,343.06 133.04,343.51 134.93,343.73 136.81,345.20 138.69,346.62 140.57,347.66 142.45,347.79 144.33,348.49 146.21,349.28 148.09,350.31 149.97,352.48 151.85,354.06 153.74,355.87 155.62,357.41 157.50,358.56 159.38,359.59 161.26,358.02 163.14,357.38 165.02,356.17 166.90,354.89 168.78,354.37 170.66,353.70 172.55,353.41 174.43,353.31 176.31,352.42 178.19,351.33 180.07,349.69 181.95,348.51 183.83,347.48 185.71,346.17 187.59,347.51 189.47,347.30 191.36,347.51 193.24,347.08 195.12,346.85 197.00,346.41 198.88,345.69 200.76,344.38 202.64,342.09 204.52,340.20 206.40,339.07 208.28,337.68 210.17,337.63 212.05,337.88 213.93,337.66 215.81,337.47 217.69,336.81 219.57,337.69 221.45,338.21 223.33,338.25 225.21,338.65 227.09,340.26 228.98,342.23 230.86,344.56 232.74,344.97 234.62,345.71 236.50,345.15 238.38,343.60 240.26,342.45 242.14,341.17 244.02,340.48 245.91,338.72 247.79,336.67 249.67,335.19 251.55,333.23 253.43,330.39 255.31,327.95 257.19,324.35 259.07,322.00 260.95,319.25 262.83,317.43 264.71,316.63 266.60,315.47 268.48,314.65 270.36,313.69 272.24,312.96 274.12,312.08 276.00,311.62 277.88,311.68 279.76,311.90 281.64,311.84 283.52,312.70 285.41,313.54 287.29,312.90 289.17,311.32 291.05,309.44 292.93,308.15 294.81,306.87 296.69,304.66 298.57,303.48 300.45,303.78 302.33,303.58 304.22,303.46 306.10,302.61 307.98,302.32 309.86,301.84 311.74,301.39 313.62,302.01 315.50,304.00 317.38,305.95 319.26,307.66 321.14,308.83 323.03,310.62 324.91,312.32 326.79,313.54 328.67,315.83 330.55,317.65 332.43,319.99 334.31,321.70 336.19,323.87 338.07,326.61 339.95,330.55 341.84,332.99 343.72,335.19 345.60,337.10 347.48,338.31 349.36,339.11 351.24,339.68 353.12,340.43 355.00,340.60 356.88,340.99 358.76,340.48 360.65,340.51 362.53,340.54 364.41,340.23 366.29,339.25 368.17,339.61 370.05,340.80 371.93,342.07 373.81,342.65 375.69,343.68 377.57,344.38 379.46,344.66 381.34,344.13 383.22,342.57 385.10,341.58 386.98,340.14 388.86,339.46 390.74,338.07 392.62,336.70 394.50,335.43 396.38,333.59 398.27,331.08 400.15,330.68 402.03,330.02 403.91,328.48 405.79,325.95 407.67,324.16 409.55,323.64 411.43,323.17 413.31,322.80 415.19,321.39 417.08,319.69 418.96,317.68 420.84,315.03 422.72,312.47 424.60,310.15 426.48,306.69 428.36,303.12 430.24,302.17 432.12,302.28 434.00,301.98 435.89,301.30 437.77,300.71 439.65,300.90 441.53,301.42 443.41,303.21 445.29,305.83 447.17,309.20 449.05,312.89 450.93,316.40 452.81,320.07 454.70,324.59 456.58,326.62 458.46,327.63 460.34,328.42 462.22,329.06 464.10,329.61 465.98,330.32 467.86,329.38 469.74,327.62 471.62,326.22 473.51,324.66 475.39,322.41 477.27,320.55 479.15,320.10 481.03,319.69 482.91,318.90 484.79,319.28 486.67,318.73 488.55,318.18 490.44,317.79 492.32,317.89 494.20,318.81 496.08,319.84 497.96,319.40 499.84,319.17 501.72,319.38 503.60,319.78 505.48,319.58 507.36,318.28 509.25,317.76 511.13,317.24 513.01,317.88 514.89,318.98 516.77,319.68 518.65,318.50 520.53,317.71 522.41,316.96 524.29,316.54 526.17,314.74 528.06,312.83 529.94,311.10 531.82,309.89 533.70,309.04 535.58,307.90 537.46,306.02 539.34,305.16 541.22,303.96 543.10,303.53 544.98,305.13 546.87,307.09 548.75,309.65 550.63,313.32 552.51,316.79 554.39,320.39 556.27,323.02 558.15,325.02 560.03,327.47 561.91,329.23 563.79,330.49 565.67,331.04 567.56,331.98 569.44,332.18 571.32,330.75 573.20,330.17 575.08,328.85 576.96,327.19 578.84,327.91 580.72,328.85 582.60,329.25 584.49,329.07 586.37,329.01 588.25,330.32 590.13,332.60 592.01,334.77 593.89,336.30 595.77,338.14 597.65,339.99 599.53,341.09 601.41,342.88 603.29,343.31 605.18,342.01 607.06,340.39 608.94,339.51 610.82,339.30 612.70,339.17 614.58,338.70 616.46,338.52 618.34,337.96 620.22,337.86" fill="none" stroke="#e5c13a" stroke-width="1.2" stroke-linejoin="round"/>
<g transform="translate(620,252.05)"><circle r="6.25" fill="none" stroke="#a646c4" stroke-width="1.35"/><path d="M1.3,-3.3 L-2.4,0.45 L-0.35,0.45 L-1.7,3.3 L3.0,-0.85 L0.65,-0.85 Z" fill="#b04fd0"/><circle cx="4.6" cy="-4.45" r="2.75" fill="#0f0f0f"/><circle cx="4.6" cy="-4.45" r="1.95" fill="#f23645"/></g></svg>
<div class="t" style="left:6.40px;top:5.89px;font-size:8.1px;font-weight:normal;color:#ececec;transform-origin:0 0;transform:translateY(0px) scaleX(0.9748);-webkit-text-stroke:0.34px #ececec;">nderitumichaelg</div>
<div class="t" style="left:64.30px;top:5.89px;font-size:8.1px;font-weight:normal;color:#ececec;transform-origin:0 0;transform:translateY(0px) scaleX(0.9739);-webkit-text-stroke:0.34px #ececec;">created with</div>
<div class="t" style="left:109.60px;top:5.89px;font-size:8.1px;font-weight:normal;color:#ececec;transform-origin:0 0;transform:translateY(0px) scaleX(0.9203);-webkit-text-stroke:0.34px #ececec;">TradingView.com,</div>
<div class="t" style="left:171.60px;top:5.89px;font-size:8.1px;font-weight:normal;color:#ececec;transform-origin:0 0;transform:translateY(0px) scaleX(0.8493);-webkit-text-stroke:0.34px #ececec;">Nov 01,</div>
<div class="t" style="left:199.60px;top:5.89px;font-size:8.1px;font-weight:normal;color:#ececec;transform-origin:0 0;transform:translateY(0px) scaleX(0.8837);-webkit-text-stroke:0.34px #ececec;">2025 22:46 UTC</div>
<div class="t" style="left:11.50px;top:22.54px;font-size:8.7px;font-weight:normal;color:#d1d1d1;transform-origin:0 0;transform:translateY(0px) scaleX(0.8537);">SOL / TetherUS · 1D · Binance</div>
<div class="t" style="left:117.30px;top:22.54px;font-size:8.7px;font-weight:normal;color:#d1d1d1;transform-origin:0 0;transform:translateY(0px) scaleX(0.8307);">O<span style="color:#f23645">187.21</span></div>
<div class="t" style="left:149.70px;top:22.54px;font-size:8.7px;font-weight:normal;color:#d1d1d1;transform-origin:0 0;transform:translateY(0px) scaleX(0.8369);">H<span style="color:#f23645">187.55</span></div>
<div class="t" style="left:182.30px;top:22.54px;font-size:8.7px;font-weight:normal;color:#d1d1d1;transform-origin:0 0;transform:translateY(0px) scaleX(0.8374);">L<span style="color:#f23645">183.79</span></div>
<div class="t" style="left:213.00px;top:22.54px;font-size:8.7px;font-weight:normal;color:#d1d1d1;transform-origin:0 0;transform:translateY(0px) scaleX(0.8308);">C<span style="color:#f23645">185.65</span></div>
<div class="t" style="left:245.10px;top:22.54px;font-size:8.7px;font-weight:normal;color:#f23645;transform-origin:0 0;transform:translateY(0px) scaleX(0.8215);">−1.56 (−0.83%)</div>
<div class="t" style="left:11.90px;top:266.52px;font-size:8.6px;font-weight:normal;color:#d1d1d1;transform-origin:0 0;transform:translateY(0px) scaleX(0.8339);">RSI (14, close)</div>
<div class="t" style="left:64.40px;top:266.52px;font-size:8.6px;font-weight:normal;color:#7e57c2;transform-origin:0 0;transform:translateY(0px) scaleX(0.8366);">42.51</div>
<div class="t" style="left:87.50px;top:266.52px;font-size:8.6px;font-weight:normal;color:#f0c929;transform-origin:0 0;transform:translateY(0px) scaleX(0.8738);">44.56</div>
<div class="t" style="left:736.60px;top:251.07px;font-size:8.7px;font-weight:normal;color:#cfcfcf;transform-origin:0 0;transform:translateY(0.5px) scaleX(0.8828);">80.00</div>
<div class="t" style="left:736.60px;top:231.27px;font-size:8.7px;font-weight:normal;color:#cfcfcf;transform-origin:0 0;transform:translateY(0.5px) scaleX(0.8654);">100.00</div>
<div class="t" style="left:736.60px;top:211.47px;font-size:8.7px;font-weight:normal;color:#cfcfcf;transform-origin:0 0;transform:translateY(0.5px) scaleX(0.8654);">120.00</div>
<div class="t" style="left:736.60px;top:191.67px;font-size:8.7px;font-weight:normal;color:#cfcfcf;transform-origin:0 0;transform:translateY(0.5px) scaleX(0.8654);">140.00</div>
<div class="t" style="left:736.60px;top:171.87px;font-size:8.7px;font-weight:normal;color:#cfcfcf;transform-origin:0 0;transform:translateY(0.5px) scaleX(0.8654);">160.00</div>
<div class="t" style="left:736.60px;top:132.27px;font-size:8.7px;font-weight:normal;color:#cfcfcf;transform-origin:0 0;transform:translateY(0.5px) scaleX(0.8654);">200.00</div>
<div class="t" style="left:736.60px;top:112.47px;font-size:8.7px;font-weight:normal;color:#cfcfcf;transform-origin:0 0;transform:translateY(0.5px) scaleX(0.8654);">220.00</div>
<div class="t" style="left:736.60px;top:92.67px;font-size:8.7px;font-weight:normal;color:#cfcfcf;transform-origin:0 0;transform:translateY(0.5px) scaleX(0.8654);">240.00</div>
<div class="t" style="left:736.60px;top:72.87px;font-size:8.7px;font-weight:normal;color:#cfcfcf;transform-origin:0 0;transform:translateY(0.5px) scaleX(0.8654);">260.00</div>
<div class="t" style="left:736.60px;top:53.07px;font-size:8.7px;font-weight:normal;color:#cfcfcf;transform-origin:0 0;transform:translateY(0.5px) scaleX(0.8654);">280.00</div>
<div class="t" style="left:736.60px;top:33.27px;font-size:8.7px;font-weight:normal;color:#cfcfcf;transform-origin:0 0;transform:translateY(0.5px) scaleX(0.8654);">300.00</div>
<div class="t" style="left:736.60px;top:13.47px;font-size:8.7px;font-weight:normal;color:#cfcfcf;transform-origin:0 0;transform:translateY(0.5px) scaleX(0.8654);clip-path:inset(4.9px 0 0 0);">320.00</div>
<div class="t" style="left:736.60px;top:376.18px;font-size:8.7px;font-weight:normal;color:#cfcfcf;transform-origin:0 0;transform:translateY(0.5px) scaleX(0.8828);clip-path:inset(0 0 2.5px 0);">20.00</div>
<div class="t" style="left:736.60px;top:341.88px;font-size:8.7px;font-weight:normal;color:#cfcfcf;transform-origin:0 0;transform:translateY(0.5px) scaleX(0.8828);">40.00</div>
<div class="t" style="left:736.60px;top:307.57px;font-size:8.7px;font-weight:normal;color:#cfcfcf;transform-origin:0 0;transform:translateY(0.5px) scaleX(0.8828);">60.00</div>
<div class="t" style="left:736.60px;top:273.27px;font-size:8.7px;font-weight:normal;color:#cfcfcf;transform-origin:0 0;transform:translateY(0.5px) scaleX(0.8828);">80.00</div>
<div class="t" style="left:39.65px;top:387.32px;font-size:8.6px;font-weight:bold;color:#e6e6e6;transform-origin:0 0;transform:translateY(0px) scaleX(0.9150);">2025</div>
<div class="t" style="left:100.41px;top:387.32px;font-size:8.6px;font-weight:normal;color:#cfcfcf;transform-origin:0 0;transform:translateY(0px) scaleX(0.8506);">Feb</div>
<div class="t" style="left:153.18px;top:387.32px;font-size:8.6px;font-weight:normal;color:#cfcfcf;transform-origin:0 0;transform:translateY(0px) scaleX(0.8371);">Mar</div>
<div class="t" style="left:211.89px;top:387.32px;font-size:8.6px;font-weight:normal;color:#cfcfcf;transform-origin:0 0;transform:translateY(0px) scaleX(0.8673);">Apr</div>
<div class="t" style="left:267.12px;top:387.32px;font-size:8.6px;font-weight:normal;color:#cfcfcf;transform-origin:0 0;transform:translateY(0px) scaleX(0.8615);">May</div>
<div class="t" style="left:326.43px;top:387.32px;font-size:8.6px;font-weight:normal;color:#cfcfcf;transform-origin:0 0;transform:translateY(0px) scaleX(0.8658);">Jun</div>
<div class="t" style="left:384.06px;top:387.32px;font-size:8.6px;font-weight:normal;color:#cfcfcf;transform-origin:0 0;transform:translateY(0px) scaleX(0.8727);">Jul</div>
<div class="t" style="left:440.37px;top:387.32px;font-size:8.6px;font-weight:normal;color:#cfcfcf;transform-origin:0 0;transform:translateY(0px) scaleX(0.8891);">Aug</div>
<div class="t" style="left:498.98px;top:387.32px;font-size:8.6px;font-weight:normal;color:#cfcfcf;transform-origin:0 0;transform:translateY(0px) scaleX(0.8498);">Sep</div>
<div class="t" style="left:556.01px;top:387.32px;font-size:8.6px;font-weight:normal;color:#cfcfcf;transform-origin:0 0;transform:translateY(0px) scaleX(0.8822);">Oct</div>
<div class="t" style="left:613.72px;top:387.32px;font-size:8.6px;font-weight:normal;color:#cfcfcf;transform-origin:0 0;transform:translateY(0px) scaleX(0.8498);">Nov</div>
<div class="t" style="left:670.15px;top:387.32px;font-size:8.6px;font-weight:normal;color:#cfcfcf;transform-origin:0 0;transform:translateY(0px) scaleX(0.8498);">Dec</div>
<div class="lb" style="left:731.5px;top:145.8px;width:37.9px;height:19.6px;background:#f23645;"></div>
<div class="lb" style="left:731.5px;top:325.8px;width:27.6px;height:10.4px;background:#fdd835;"></div>
<div class="lb" style="left:731.5px;top:336.2px;width:27.6px;height:10.6px;background:#7e57c2;"></div>
<div class="t" style="left:737.30px;top:146.74px;font-size:8.7px;font-weight:normal;color:#ffffff;transform-origin:0 0;transform:translateY(0px) scaleX(0.8541);-webkit-text-stroke:0.15px #fff;">185.65</div>
<div class="t" style="left:736.90px;top:157.36px;font-size:8.2px;font-weight:normal;color:#ffd9dc;transform-origin:0 0;transform:translateY(0px) scaleX(0.9286);-webkit-text-stroke:0.12px #ffd9dc;">01:13:44</div>
<div class="t" style="left:737.20px;top:326.72px;font-size:8.6px;font-weight:normal;color:#1a1a1a;transform-origin:0 0;transform:translateY(0px) scaleX(0.8738);">44.56</div>
<div class="t" style="left:737.20px;top:337.12px;font-size:8.6px;font-weight:normal;color:#ffffff;transform-origin:0 0;transform:translateY(0px) scaleX(0.8738);">42.51</div>
<div class="t" style="left:31.60px;top:411.91px;font-size:13.45px;font-weight:bold;color:#ffffff;transform-origin:0 0;transform:translateY(0px) scaleX(0.9606);">TradingView</div>
<svg style="left:7.6px;top:414.2px" width="19" height="9.4" viewBox="0 0 36 18"><path d="M14 18H7V7H0V0h14v18z M28.5 18H20.5L28 0h8z" fill="#fff"/><circle cx="20" cy="3.6" r="3.6" fill="#fff"/></svg>
</body></html>
